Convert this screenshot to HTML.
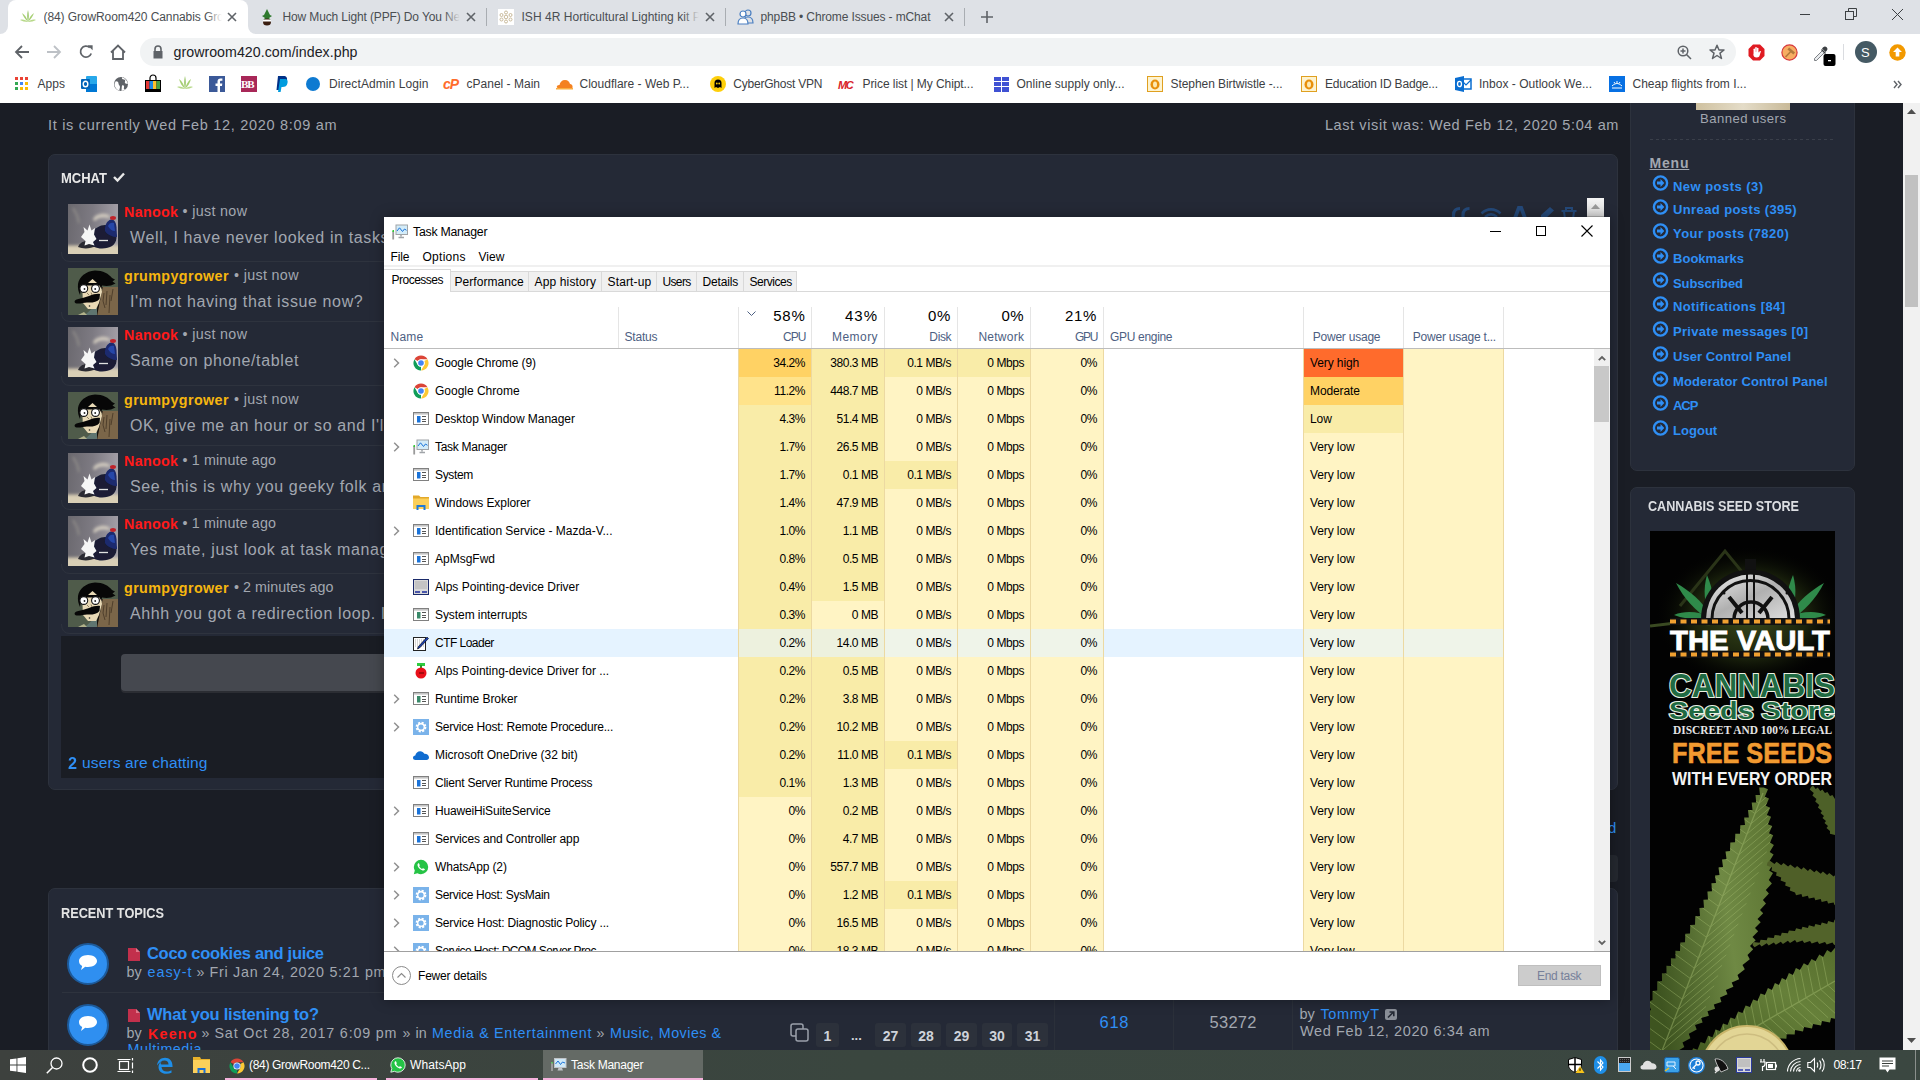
<!DOCTYPE html>
<html><head><meta charset="utf-8"><title>Task Manager</title>
<style>
*{margin:0;padding:0;box-sizing:border-box}
html,body{width:1920px;height:1080px;overflow:hidden;background:#1a1d25}
body{position:relative;font-family:"Liberation Sans",sans-serif}
.t{position:absolute;white-space:pre;line-height:1}
svg{position:absolute;overflow:visible}
</style></head><body>

<div style="position:absolute;left:0px;top:0px;width:1920px;height:34px;background:#dee1e6"></div>
<div style="position:absolute;left:0px;top:24px;width:260px;height:10px;background:#fff"></div>
<div style="position:absolute;left:-10px;top:0px;width:18px;height:34px;background:#dee1e6;border-bottom-right-radius:8px"></div>
<div style="position:absolute;left:248px;top:0px;width:20px;height:34px;background:#dee1e6;border-bottom-left-radius:8px"></div>
<div style="position:absolute;left:8px;top:0px;width:240px;height:34px;background:#fff;border-radius:8px 8px 0 0"></div>
<div style="position:absolute;left:0px;top:34px;width:1920px;height:69px;background:#fff"></div>
<div style="position:absolute;left:43.5px;top:10px;width:178px;height:16px;overflow:hidden"><div class="t" style="left:0px;top:1px;font-size:12px;color:#4a4e52;letter-spacing:-0.090px">(84) GrowRoom420 Cannabis Grow Forum</div><div style="position:absolute;right:0;top:0;width:16px;height:16px;background:linear-gradient(to right,rgba(0,0,0,0),#fff)"></div></div>
<div style="position:absolute;left:282.5px;top:10px;width:177px;height:16px;overflow:hidden"><div class="t" style="left:0px;top:1px;font-size:12px;color:#4a4e52;letter-spacing:-0.129px">How Much Light (PPF) Do You Need</div><div style="position:absolute;right:0;top:0;width:16px;height:16px;background:linear-gradient(to right,rgba(0,0,0,0),#dee1e6)"></div></div>
<div style="position:absolute;left:521.5px;top:10px;width:177px;height:16px;overflow:hidden"><div class="t" style="left:0px;top:1px;font-size:12px;color:#4a4e52;letter-spacing:0.032px">ISH 4R Horticultural Lighting kit Pro</div><div style="position:absolute;right:0;top:0;width:16px;height:16px;background:linear-gradient(to right,rgba(0,0,0,0),#dee1e6)"></div></div>
<div class="t" style="left:760.5px;top:11px;font-size:12px;color:#4a4e52;letter-spacing:-0.129px">phpBB • Chrome Issues - mChat</div>
<svg style="left:227px;top:12px" width="10" height="10" viewBox="0 0 10 10"><path d="M1 1L9 9M9 1L1 9" stroke="#5f6368" stroke-width="1.6"/></svg>
<svg style="left:466px;top:12px" width="10" height="10" viewBox="0 0 10 10"><path d="M1 1L9 9M9 1L1 9" stroke="#5f6368" stroke-width="1.6"/></svg>
<svg style="left:705px;top:12px" width="10" height="10" viewBox="0 0 10 10"><path d="M1 1L9 9M9 1L1 9" stroke="#5f6368" stroke-width="1.6"/></svg>
<svg style="left:944px;top:12px" width="10" height="10" viewBox="0 0 10 10"><path d="M1 1L9 9M9 1L1 9" stroke="#5f6368" stroke-width="1.6"/></svg>
<div style="position:absolute;left:486px;top:8px;width:1px;height:18px;background:#a9adb2"></div>
<div style="position:absolute;left:725px;top:8px;width:1px;height:18px;background:#a9adb2"></div>
<div style="position:absolute;left:964px;top:8px;width:1px;height:18px;background:#a9adb2"></div>
<svg style="left:981px;top:11px" width="12" height="12" viewBox="0 0 12 12"><path d="M6 0V12M0 6H12" stroke="#5f6368" stroke-width="1.6"/></svg>
<svg style="left:20px;top:9px" width="16" height="16" viewBox="0 0 16 16"><path d="M8 1C9 5 9 9 8 13C7 9 7 5 8 1Z" fill="#8fbf5a"/><path d="M8 13C5 10 3 7 2 4C5 6 7 9 8 13Z" fill="#a6cf72"/><path d="M8 13C11 10 13 7 14 4C11 6 9 9 8 13Z" fill="#a6cf72"/><path d="M8 13C5 13 2 12 0 11C3 10 6 11 8 13Z" fill="#b8d98a"/><path d="M8 13C11 13 14 12 16 11C13 10 10 11 8 13Z" fill="#b8d98a"/></svg>
<svg style="left:260px;top:9px" width="14" height="17" viewBox="0 0 14 17"><path d="M7 0L10 6L12 7L9 9L11 11L3 11L5 9L2 7L4 6Z" fill="#2f7a2e"/><ellipse cx="7" cy="13" rx="4" ry="3.5" fill="#3b1e10"/><rect x="3" y="10.5" width="8" height="2" fill="#fff"/></svg>
<svg style="left:498px;top:9px" width="16" height="16" viewBox="0 0 16 16"><rect width="16" height="16" fill="#fff"/><g fill="none" stroke="#c8b99a" stroke-width="1"><circle cx="8" cy="8" r="1.8"/><circle cx="8" cy="3.5" r="1.5"/><circle cx="8" cy="12.5" r="1.5"/><circle cx="3.5" cy="6" r="1.5"/><circle cx="12.5" cy="6" r="1.5"/><circle cx="3.5" cy="10.5" r="1.5"/><circle cx="12.5" cy="10.5" r="1.5"/></g></svg>
<svg style="left:737px;top:8px" width="17" height="17" viewBox="0 0 17 17"><g fill="none" stroke="#4a7fc1" stroke-width="1.2"><circle cx="11" cy="5" r="3"/><path d="M6 15C6 10 8.5 9 11 9C13.5 9 16 10 16 15Z"/><circle cx="6" cy="6" r="3" fill="#fff"/><path d="M1 16C1 11 3.5 10 6 10C8.5 10 11 11 11 16Z" fill="#fff"/></g></svg>
<div style="position:absolute;left:1800px;top:14px;width:10px;height:1px;background:#3c4043"></div>
<svg style="left:1845px;top:8px" width="12" height="12" viewBox="0 0 12 12"><g fill="none" stroke="#3c4043" stroke-width="1"><rect x="0.5" y="3.5" width="8" height="8"/><path d="M3.5 3.5V0.5H11.5V8.5H8.5"/></g></svg>
<svg style="left:1892px;top:9px" width="11" height="11" viewBox="0 0 11 11"><path d="M0 0L11 11M11 0L0 11" stroke="#3c4043" stroke-width="1"/></svg>
<svg style="left:14px;top:44px" width="16" height="16" viewBox="0 0 16 16"><path d="M15 8H2M8 2L2 8L8 14" fill="none" stroke="#5f6368" stroke-width="1.8"/></svg>
<svg style="left:46px;top:44px" width="16" height="16" viewBox="0 0 16 16"><path d="M1 8H14M8 2L14 8L8 14" fill="none" stroke="#bdc1c6" stroke-width="1.8"/></svg>
<svg style="left:78px;top:44px" width="16" height="16" viewBox="0 0 16 16"><path d="M13.2 9.5A5.5 5.5 0 1 1 11.8 3.6" fill="none" stroke="#5f6368" stroke-width="1.8"/><path d="M9.5 1.2L14.6 1.2L14.6 6.3Z" fill="#5f6368"/></svg>
<svg style="left:110px;top:44px" width="16" height="16" viewBox="0 0 16 16"><path d="M1 8.5L8 1.5L15 8.5M3 6.8V15H13V6.8" fill="none" stroke="#5f6368" stroke-width="1.8" stroke-linejoin="miter"/></svg>
<div style="position:absolute;left:140px;top:38px;width:1596px;height:28px;background:#f1f3f4;border-radius:14px"></div>
<svg style="left:152px;top:45px" width="12" height="14" viewBox="0 0 12 14"><path d="M3 6V4A3 3 0 0 1 9 4V6" fill="none" stroke="#5f6368" stroke-width="1.6"/><rect x="1.5" y="6" width="9" height="7.5" fill="#5f6368"/></svg>
<div class="t" style="left:173.5px;top:45px;font-size:14.2px;color:#202124;letter-spacing:0.043px">growroom420.com/index.php</div>
<svg style="left:1677px;top:45px" width="15" height="15" viewBox="0 0 15 15"><circle cx="6" cy="6" r="4.8" fill="none" stroke="#5f6368" stroke-width="1.5"/><path d="M9.5 9.5L14 14M6 3.5V8.5M3.5 6H8.5" stroke="#5f6368" stroke-width="1.5"/></svg>
<svg style="left:1709px;top:44px" width="16" height="16" viewBox="0 0 16 16"><path d="M8 1.3L10 6H15L11 9.2L12.5 14.5L8 11.5L3.5 14.5L5 9.2L1 6H6Z" fill="none" stroke="#5f6368" stroke-width="1.5" stroke-linejoin="round"/></svg>
<svg style="left:1748px;top:44px" width="17" height="17" viewBox="0 0 17 17"><path d="M5 0.5H12L16.5 5V12L12 16.5H5L0.5 12V5Z" fill="#e01b22"/><g stroke="#fff" stroke-linecap="round" fill="none"><path d="M6.3 9V5.2" stroke-width="1.5"/><path d="M8 9V3.8" stroke-width="1.6"/><path d="M9.7 9V4.4" stroke-width="1.5"/><path d="M11.3 10L12.2 7.6" stroke-width="1.4"/></g><ellipse cx="8.6" cy="10.6" rx="3.2" ry="2.9" fill="#fff"/></svg>
<svg style="left:1781px;top:44px" width="17" height="17" viewBox="0 0 17 17"><circle cx="8.5" cy="8.5" r="7.6" fill="#f7ad62" stroke="#d6363a" stroke-width="1.2"/><path d="M4.5 13L10.5 6.8" stroke="#b27a3c" stroke-width="1.6"/><path d="M7.3 4.6L13.2 9.6" stroke="#b27a3c" stroke-width="2.6"/></svg>
<svg style="left:1813px;top:43px" width="24" height="24" viewBox="0 0 24 24"><path d="M1.5 15.5L9.5 7.5L11.5 9.5L3.5 17.5L1.5 17.5Z" fill="#e8eaed" stroke="#6f7478" stroke-width="0.9"/><path d="M9 5.5L10.2 4.3A2.2 2.2 0 0 1 13.7 7.8L12.5 9Z" fill="#3c4043"/><path d="M8.5 6.5L12.5 10.5" stroke="#3c4043" stroke-width="1.4"/><rect x="10.5" y="11" width="12" height="12" rx="2" fill="#000"/><rect x="15" y="17" width="3" height="1.3" fill="#fff"/></svg>
<div style="position:absolute;left:1843px;top:44px;width:1px;height:16px;background:#dadce0"></div>
<div style="position:absolute;left:1855px;top:41px;width:22px;height:22px;border-radius:50%;background:#455a64"></div>
<div class="t" style="left:1861px;top:46px;font-size:13px;color:#fff">S</div>
<svg style="left:1889px;top:44px" width="17" height="17" viewBox="0 0 17 17"><circle cx="8.5" cy="8.5" r="8.2" fill="#f29900"/><path d="M8.5 3.5L13 8H10.3V12.5H6.7V8H4Z" fill="#fff"/></svg>
<div class="t" style="left:37.5px;top:78px;font-size:12px;color:#3c4043;letter-spacing:0.047px">Apps</div>
<div class="t" style="left:329.0px;top:78px;font-size:12px;color:#3c4043;letter-spacing:0.091px">DirectAdmin Login</div>
<div class="t" style="left:466.5px;top:78px;font-size:12px;color:#3c4043;letter-spacing:0.010px">cPanel - Main</div>
<div class="t" style="left:579.5px;top:78px;font-size:12px;color:#3c4043;letter-spacing:0.006px">Cloudflare - Web P...</div>
<div class="t" style="left:733.25px;top:78px;font-size:12px;color:#3c4043;letter-spacing:-0.215px">CyberGhost VPN</div>
<div class="t" style="left:862.5px;top:78px;font-size:12px;color:#3c4043;letter-spacing:-0.065px">Price list | My Chipt...</div>
<div class="t" style="left:1016.5px;top:78px;font-size:12px;color:#3c4043;letter-spacing:0.041px">Online supply only...</div>
<div class="t" style="left:1170.5px;top:78px;font-size:12px;color:#3c4043;letter-spacing:-0.063px">Stephen Birtwistle -...</div>
<div class="t" style="left:1325.0px;top:78px;font-size:12px;color:#3c4043;letter-spacing:-0.188px">Education ID Badge...</div>
<div class="t" style="left:1479.0px;top:78px;font-size:12px;color:#3c4043;letter-spacing:0.025px">Inbox - Outlook We...</div>
<div class="t" style="left:1632.5px;top:78px;font-size:12px;color:#3c4043;letter-spacing:-0.002px">Cheap flights from I...</div>
<div style="position:absolute;left:15px;top:77px;width:3px;height:3px;background:#ea4335"></div>
<div style="position:absolute;left:20px;top:77px;width:3px;height:3px;background:#ea4335"></div>
<div style="position:absolute;left:25px;top:77px;width:3px;height:3px;background:#ea4335"></div>
<div style="position:absolute;left:15px;top:82px;width:3px;height:3px;background:#34a853"></div>
<div style="position:absolute;left:20px;top:82px;width:3px;height:3px;background:#4285f4"></div>
<div style="position:absolute;left:25px;top:82px;width:3px;height:3px;background:#fbbc05"></div>
<div style="position:absolute;left:15px;top:87px;width:3px;height:3px;background:#34a853"></div>
<div style="position:absolute;left:20px;top:87px;width:3px;height:3px;background:#fbbc05"></div>
<div style="position:absolute;left:25px;top:87px;width:3px;height:3px;background:#fbbc05"></div>
<svg style="left:81px;top:76px" width="16" height="16" viewBox="0 0 16 16"><rect x="5" y="0" width="11" height="16" rx="1" fill="#28a8ea"/><rect x="5" y="8" width="11" height="8" fill="#0078d4"/><rect x="0" y="3" width="9" height="10" rx="1" fill="#0364b8"/><ellipse cx="4.5" cy="8" rx="2.3" ry="2.8" fill="none" stroke="#fff" stroke-width="1.4"/></svg>
<svg style="left:113px;top:76px" width="16" height="16" viewBox="0 0 16 16"><circle cx="8" cy="8" r="7" fill="#5f6368"/><path d="M2.5 5.5C4 5 5.5 6 5.5 7.5C5.5 9 7 9.5 7 11C7 12.5 6 13.5 6.5 14.8L4 13.5C2.5 12 1.5 10 1.5 8Z M9 1.2C8.5 2.5 9.5 3.5 11 3.5C12 3.5 12.5 4.5 12 5.5C11.5 6.5 12 7.5 13.5 7.8L14.8 8C14.5 5 12.5 2.2 9 1.2Z M9.5 9C10.5 9 11.5 10 11 11.5C10.5 12.5 11 13 11.8 13.5C10.5 14.5 9.5 14.8 8.5 15C8.8 13.5 8.5 12 8.8 10.5Z" fill="#fff"/></svg>
<svg style="left:145px;top:75px" width="16" height="17" viewBox="0 0 16 17"><path d="M5 5V3A3 3 0 0 1 11 3V5" fill="none" stroke="#000" stroke-width="1.2"/><rect x="0" y="5" width="16" height="12" fill="#000"/><rect x="1" y="6" width="3.5" height="8" fill="#e53935"/><rect x="4.5" y="6" width="3.5" height="8" fill="#1e88e5"/><rect x="8" y="6" width="3.5" height="8" fill="#fbc02d"/><rect x="11.5" y="6" width="3.5" height="8" fill="#43a047"/></svg>
<svg style="left:177px;top:76px" width="16" height="16" viewBox="0 0 16 16"><path d="M8 0C9 4 9 9 8 13C7 9 7 4 8 0Z" fill="#8fbf5a"/><path d="M8 13C5 10 3 7 2 3C5 5 7 9 8 13Z" fill="#a6cf72"/><path d="M8 13C11 10 13 7 14 3C11 5 9 9 8 13Z" fill="#a6cf72"/><path d="M8 13C5 13 2 12 0 11C3 10 6 11 8 13Z" fill="#b8d98a"/><path d="M8 13C11 13 14 12 16 11C13 10 10 11 8 13Z" fill="#b8d98a"/></svg>
<svg style="left:209px;top:76px" width="16" height="16" viewBox="0 0 16 16"><rect width="16" height="16" fill="#3b5998"/><path d="M11 16V10H13L13.3 7.5H11V6C11 5.3 11.3 4.8 12.3 4.8H13.4V2.6C13 2.5 12.3 2.4 11.5 2.4C9.7 2.4 8.5 3.5 8.5 5.5V7.5H6.5V10H8.5V16Z" fill="#fff"/></svg>
<div style="position:absolute;left:241px;top:76px;width:16px;height:16px;background:#a82858"></div>
<div class="t" style="left:241px;top:78px;font:bold 11px 'Liberation Serif',serif;color:#fff;letter-spacing:-1px">BB</div>
<svg style="left:275px;top:76px" width="13" height="16" viewBox="0 0 13 16"><path d="M3 0H8.5C11.5 0 12.5 2 12 4.5C11.4 7.5 9.5 8.5 7 8.5H5.5L4.5 14H1.5Z" fill="#003087"/><path d="M5 3H9.5C12.5 3 13 5 12.5 7C12 10 10 11 7.5 11H6.5L5.6 16H3Z" fill="#009cde"/></svg>
<div style="position:absolute;left:306px;top:77px;width:14px;height:14px;border-radius:50%;background:#0e7ad1"></div>
<div class="t" style="left:443px;top:76px;font:italic bold 14px 'Liberation Sans',sans-serif;color:#ff6c2c;letter-spacing:-1px">cP</div>
<svg style="left:556px;top:78px" width="17" height="12" viewBox="0 0 17 12"><path d="M2 10C1 10 0.5 9 1 8C1.5 7 3 7 3.5 7C4 4 6 2 9 2C12 2 13.5 4 14 6C15.5 6 17 7 16.5 10Z" fill="#f48120"/><rect x="0" y="10" width="17" height="1.5" fill="#faad3f"/></svg>
<svg style="left:710px;top:76px" width="16" height="16" viewBox="0 0 16 16"><circle cx="8" cy="8" r="8" fill="#fecf0a"/><path d="M4.5 12V7A3.5 3.5 0 0 1 11.5 7V12L10 11L8 12L6 11Z" fill="#000"/><circle cx="6.8" cy="7.5" r="0.9" fill="#fecf0a"/><circle cx="9.2" cy="7.5" r="0.9" fill="#fecf0a"/></svg>
<div class="t" style="left:838px;top:79px;font:italic bold 11px 'Liberation Sans',sans-serif;color:#d8232a;letter-spacing:-1.5px">MC</div>
<svg style="left:994px;top:77px" width="15" height="15" viewBox="0 0 15 15"><g fill="#3f51d3"><rect x="0" y="0" width="7" height="4"/><rect x="8" y="0" width="7" height="4"/><rect x="0" y="5" width="7" height="4"/><rect x="8" y="5" width="7" height="4"/><rect x="0" y="10" width="7" height="5"/><rect x="8" y="10" width="7" height="5"/></g></svg>
<svg style="left:1147px;top:76px" width="16" height="16" viewBox="0 0 16 16"><rect x="0.5" y="0.5" width="15" height="15" fill="#fdf3d0" stroke="#e0a020"/><ellipse cx="8" cy="8.5" rx="4.5" ry="5" fill="#e8900c"/><ellipse cx="8" cy="8.5" rx="2" ry="3" fill="#fde9b0"/></svg>
<svg style="left:1301px;top:76px" width="16" height="16" viewBox="0 0 16 16"><rect x="0.5" y="0.5" width="15" height="15" fill="#fdf3d0" stroke="#e0a020"/><ellipse cx="8" cy="8.5" rx="4.5" ry="5" fill="#e8900c"/><ellipse cx="8" cy="8.5" rx="2" ry="3" fill="#fde9b0"/></svg>
<svg style="left:1455px;top:76px" width="16" height="16" viewBox="0 0 16 16"><rect x="6" y="3" width="10" height="10" fill="none" stroke="#0a6ed1" stroke-width="1.5"/><path d="M6 4L11 9L16 4" fill="none" stroke="#0a6ed1" stroke-width="1.2"/><path d="M0 2L9 0V16L0 14Z" fill="#0a6ed1"/><ellipse cx="4.5" cy="8" rx="2" ry="2.7" fill="none" stroke="#fff" stroke-width="1.3"/></svg>
<svg style="left:1609px;top:76px" width="16" height="16" viewBox="0 0 16 16"><rect width="16" height="16" fill="#0770e3"/><path d="M3 10C5 8 7 7.5 8 7.5C9 7.5 11 8 13 10M8 5V7M5 6L6 7.5M11 6L10 7.5M3 12H13" stroke="#fff" stroke-width="1" fill="none"/></svg>
<svg style="left:1893px;top:80px" width="9" height="9" viewBox="0 0 9 9"><path d="M1 1L4 4.5L1 8M5 1L8 4.5L5 8" fill="none" stroke="#5f6368" stroke-width="1.4"/></svg>
<div style="position:absolute;left:0;top:0;width:1920px;height:1080px;clip-path:inset(103px 0 30px 0)"><div style="position:absolute;left:0px;top:103px;width:1920px;height:947px;background:#1a1d25"></div>
<div class="t" style="left:48px;top:118px;font-size:14.5px;color:#a2a7b0;letter-spacing:0.688px">It is currently Wed Feb 12, 2020 8:09 am</div>
<div class="t" style="right:301px;top:118px;font-size:14.5px;color:#a2a7b0;letter-spacing:0.609px">Last visit was: Wed Feb 12, 2020 5:04 am</div>
<div style="position:absolute;left:48px;top:154px;width:1570px;height:636px;background:#242936;border:1px solid #2d323d;border-radius:7px"></div>
<div class="t" style="left:60.5px;top:169.5px;font:bold 14.2px 'Liberation Sans',sans-serif;color:#e8e8e8;transform:scaleX(0.9168);transform-origin:0 0">MCHAT</div>
<svg style="left:113px;top:172px" width="12" height="10" viewBox="0 0 12 10"><path d="M1 5L4.5 8.5L11 1.5" fill="none" stroke="#e8e8e8" stroke-width="2.4"/></svg>
<svg style="left:1452px;top:207px" width="20" height="12" viewBox="0 0 20 12"><path d="M8 1.5C4 1.5 1.5 4 1.5 8V12M17.5 1.5C13.5 1.5 11 4 11 8V12" stroke="#24497a" stroke-width="3.2" fill="none"/></svg>
<svg style="left:1480px;top:207px" width="22" height="12" viewBox="0 0 22 12"><path d="M1.5 6.5C7 1 15 1 20.5 6.5M5 10C9 6.5 13 6.5 17 10" stroke="#24497a" stroke-width="2.6" fill="none"/></svg>
<svg style="left:1513px;top:206px" width="14" height="12" viewBox="0 0 14 12"><path d="M4.5 0H9.5L14 12H10L7 4L4 12H0Z" fill="#24497a"/></svg>
<svg style="left:1540px;top:207px" width="14" height="12" viewBox="0 0 14 12"><path d="M10 0L14 3.5L5 12H1V8Z" fill="#24497a"/></svg>
<svg style="left:1561px;top:207px" width="16" height="12" viewBox="0 0 16 12"><path d="M5 3V1H11V3M0.5 4H15.5M3 4.5L4 12H12L13 4.5" stroke="#24497a" stroke-width="2" fill="none"/></svg>
<div style="position:absolute;left:1587px;top:198px;width:17px;height:19px;background:linear-gradient(#f4f4f4,#dcdcdc);border-bottom:1px solid #b0b0b0"></div>
<svg style="left:1591px;top:204px" width="9" height="5" viewBox="0 0 9 5"><path d="M0 5L4.5 0L9 5Z" fill="#9a9a9a"/></svg>
<svg style="left:68px;top:204px" width="50" height="50" viewBox="0 0 50 50"><defs><linearGradient id="nbg" x1="0" y1="0" x2="1" y2="0.1"><stop offset="0" stop-color="#6a686e"/><stop offset="0.5" stop-color="#7d7a82"/><stop offset="1" stop-color="#a29ea6"/></linearGradient><filter id="nbl" x="-20%" y="-20%" width="140%" height="140%"><feGaussianBlur stdDeviation="0.55"/></filter><filter id="nbl2" x="-50%" y="-50%" width="200%" height="200%"><feGaussianBlur stdDeviation="1.4"/></filter><clipPath id="ncl"><rect width="50" height="50"/></clipPath></defs><g clip-path="url(#ncl)"><rect width="50" height="50" fill="url(#nbg)"/><g filter="url(#nbl2)"><path d="M25 16C26 11 32 9 38 10C42 11 43 13 41 14C36 13 30 13 27 17Z" fill="#d6cfc2" opacity="0.9"/><path d="M5 4L9 11L11 19" stroke="#908d8a" stroke-width="1.8" fill="none"/><rect x="-5" y="41.5" width="60" height="14" fill="#d9cfb6"/></g><g filter="url(#nbl)"><path d="M10 43C12 38 17 36 23 37L28 42C22 45 15 45 10 43Z" fill="#2a2a30"/><path d="M24 29C27 24 32 21 37 21C44 21 49 27 48.5 34C48 41 42 44.5 34 44.5C28 44.5 23 42 22 38C22 35 22.5 31.5 24 29Z" fill="#1a1e36"/><path d="M37 27C36.5 21 39 16.5 43 15.5C46 15 48 18 48.5 23L49 33C45 33 39.5 31 37 27Z" fill="#1b2a6e"/><path d="M40 22C41 19 43.5 18 46 19L47 27C44 27 41.5 25 40 22Z" fill="#2646a8"/><ellipse cx="45" cy="14" rx="3" ry="1.9" fill="#c0232b"/><path d="M13 33L16.5 28L15.5 23L19.5 26.5L21.5 20.5L23.5 26.5L27 24L26 30.5L28.5 35L25 38L26.5 41.5L21 40L16.5 41.5L17.5 37Z" fill="#f6f6f6"/><path d="M31 36.5H40" stroke="#e0e0e0" stroke-width="1.3"/></g></g></svg>
<div class="t" style="left:124px;top:204.4px;font:bold 14.3px 'Liberation Sans',sans-serif;color:#ff1a1a;letter-spacing:0.312px">Nanook</div>
<div class="t" style="left:182.5px;top:204.4px;font-size:14.3px;color:#a2a7b0;letter-spacing:0.340px">• just now</div>
<div class="t" style="left:130px;top:229.5px;font-size:16px;color:#a2a7b0;letter-spacing:0.62px">Well, I have never looked in tasks</div>
<svg style="left:0;top:0" width="1" height="1"><path d="M61.5 252 Q61.5 261.5 70 261.5 L1604 261.5" fill="none" stroke="#2e333e" stroke-width="1"/></svg>
<svg style="left:68px;top:268px" width="50" height="47" viewBox="0 0 50 47"><rect width="50" height="47" fill="#4f5b4a"/><path d="M33 19L50 19V47H28.5Z" fill="#7b6649"/><path d="M34 19L28.5 47" stroke="#15100b" stroke-width="1.4"/><path d="M36 25L35 33L37 40M39 23L38 37M42 27L41 45M45 21L43 33" stroke="#4a3a28" stroke-width="0.9" fill="none"/><path d="M17 47L29 36V47Z" fill="#5f7570"/><path d="M14 15L33 15L34 24L31 35L28 41L20 41L15 35Z" fill="#e8d9b5"/><path d="M10 16C11 9 18 3 27 2.5C35 2.5 41 6 44 10L47 11.5L44.5 13.5L47.5 15.5L43 17.5C40 18 37 18 34 17.5L33.5 21L31.5 17.5L14 17.5C13 21 12.5 24 12 27C10.5 24 9.5 20 10 16Z" fill="#070707"/><path d="M20 15L24.5 11L29 15Z" fill="#e8d9b5"/><circle cx="15.8" cy="20.5" r="3.9" fill="#fff" stroke="#111" stroke-width="1.1"/><circle cx="27.5" cy="20.5" r="3.9" fill="#fff" stroke="#111" stroke-width="1.1"/><circle cx="16.5" cy="21" r="0.9" fill="#222"/><circle cx="27.2" cy="21" r="0.9" fill="#222"/><path d="M32 26C29 25.5 25 26.5 21 28C17 29.5 12 30.5 8.5 31.5C6 32.5 6 35 8.5 35.5C12 36 16 34.5 19 34.5C24 35 29 34 31.5 31Z" fill="#070707"/><path d="M19 25L21 27M23 24.5L24 27" stroke="#6a5a40" stroke-width="0.7"/><circle cx="21.5" cy="38" r="0.8" fill="#222"/><path d="M10 47L16 44L19 47Z" fill="#c9c79a" opacity="0.8"/></svg>
<div class="t" style="left:124px;top:268.4px;font:bold 14.3px 'Liberation Sans',sans-serif;color:#f6b60f;letter-spacing:0.401px">grumpygrower</div>
<div class="t" style="left:234px;top:268.4px;font-size:14.3px;color:#a2a7b0;letter-spacing:0.340px">• just now</div>
<div class="t" style="left:130px;top:293.5px;font-size:16px;color:#a2a7b0;letter-spacing:0.62px">I&#x27;m not having that issue now?</div>
<svg style="left:0;top:0" width="1" height="1"><path d="M61.5 312 Q61.5 321.5 70 321.5 L1604 321.5" fill="none" stroke="#2e333e" stroke-width="1"/></svg>
<svg style="left:68px;top:327px" width="50" height="50" viewBox="0 0 50 50"><defs><linearGradient id="nbg" x1="0" y1="0" x2="1" y2="0.1"><stop offset="0" stop-color="#6a686e"/><stop offset="0.5" stop-color="#7d7a82"/><stop offset="1" stop-color="#a29ea6"/></linearGradient><filter id="nbl" x="-20%" y="-20%" width="140%" height="140%"><feGaussianBlur stdDeviation="0.55"/></filter><filter id="nbl2" x="-50%" y="-50%" width="200%" height="200%"><feGaussianBlur stdDeviation="1.4"/></filter><clipPath id="ncl"><rect width="50" height="50"/></clipPath></defs><g clip-path="url(#ncl)"><rect width="50" height="50" fill="url(#nbg)"/><g filter="url(#nbl2)"><path d="M25 16C26 11 32 9 38 10C42 11 43 13 41 14C36 13 30 13 27 17Z" fill="#d6cfc2" opacity="0.9"/><path d="M5 4L9 11L11 19" stroke="#908d8a" stroke-width="1.8" fill="none"/><rect x="-5" y="41.5" width="60" height="14" fill="#d9cfb6"/></g><g filter="url(#nbl)"><path d="M10 43C12 38 17 36 23 37L28 42C22 45 15 45 10 43Z" fill="#2a2a30"/><path d="M24 29C27 24 32 21 37 21C44 21 49 27 48.5 34C48 41 42 44.5 34 44.5C28 44.5 23 42 22 38C22 35 22.5 31.5 24 29Z" fill="#1a1e36"/><path d="M37 27C36.5 21 39 16.5 43 15.5C46 15 48 18 48.5 23L49 33C45 33 39.5 31 37 27Z" fill="#1b2a6e"/><path d="M40 22C41 19 43.5 18 46 19L47 27C44 27 41.5 25 40 22Z" fill="#2646a8"/><ellipse cx="45" cy="14" rx="3" ry="1.9" fill="#c0232b"/><path d="M13 33L16.5 28L15.5 23L19.5 26.5L21.5 20.5L23.5 26.5L27 24L26 30.5L28.5 35L25 38L26.5 41.5L21 40L16.5 41.5L17.5 37Z" fill="#f6f6f6"/><path d="M31 36.5H40" stroke="#e0e0e0" stroke-width="1.3"/></g></g></svg>
<div class="t" style="left:124px;top:327.4px;font:bold 14.3px 'Liberation Sans',sans-serif;color:#ff1a1a;letter-spacing:0.312px">Nanook</div>
<div class="t" style="left:182.5px;top:327.4px;font-size:14.3px;color:#a2a7b0;letter-spacing:0.340px">• just now</div>
<div class="t" style="left:130px;top:352.5px;font-size:16px;color:#a2a7b0;letter-spacing:0.62px">Same on phone/tablet</div>
<svg style="left:0;top:0" width="1" height="1"><path d="M61.5 376 Q61.5 385.5 70 385.5 L1604 385.5" fill="none" stroke="#2e333e" stroke-width="1"/></svg>
<svg style="left:68px;top:392px" width="50" height="47" viewBox="0 0 50 47"><rect width="50" height="47" fill="#4f5b4a"/><path d="M33 19L50 19V47H28.5Z" fill="#7b6649"/><path d="M34 19L28.5 47" stroke="#15100b" stroke-width="1.4"/><path d="M36 25L35 33L37 40M39 23L38 37M42 27L41 45M45 21L43 33" stroke="#4a3a28" stroke-width="0.9" fill="none"/><path d="M17 47L29 36V47Z" fill="#5f7570"/><path d="M14 15L33 15L34 24L31 35L28 41L20 41L15 35Z" fill="#e8d9b5"/><path d="M10 16C11 9 18 3 27 2.5C35 2.5 41 6 44 10L47 11.5L44.5 13.5L47.5 15.5L43 17.5C40 18 37 18 34 17.5L33.5 21L31.5 17.5L14 17.5C13 21 12.5 24 12 27C10.5 24 9.5 20 10 16Z" fill="#070707"/><path d="M20 15L24.5 11L29 15Z" fill="#e8d9b5"/><circle cx="15.8" cy="20.5" r="3.9" fill="#fff" stroke="#111" stroke-width="1.1"/><circle cx="27.5" cy="20.5" r="3.9" fill="#fff" stroke="#111" stroke-width="1.1"/><circle cx="16.5" cy="21" r="0.9" fill="#222"/><circle cx="27.2" cy="21" r="0.9" fill="#222"/><path d="M32 26C29 25.5 25 26.5 21 28C17 29.5 12 30.5 8.5 31.5C6 32.5 6 35 8.5 35.5C12 36 16 34.5 19 34.5C24 35 29 34 31.5 31Z" fill="#070707"/><path d="M19 25L21 27M23 24.5L24 27" stroke="#6a5a40" stroke-width="0.7"/><circle cx="21.5" cy="38" r="0.8" fill="#222"/><path d="M10 47L16 44L19 47Z" fill="#c9c79a" opacity="0.8"/></svg>
<div class="t" style="left:124px;top:392.4px;font:bold 14.3px 'Liberation Sans',sans-serif;color:#f6b60f;letter-spacing:0.401px">grumpygrower</div>
<div class="t" style="left:234px;top:392.4px;font-size:14.3px;color:#a2a7b0;letter-spacing:0.340px">• just now</div>
<div class="t" style="left:130px;top:417.5px;font-size:16px;color:#a2a7b0;letter-spacing:0.62px">OK, give me an hour or so and I&#x27;ll</div>
<svg style="left:0;top:0" width="1" height="1"><path d="M61.5 436 Q61.5 445.5 70 445.5 L1604 445.5" fill="none" stroke="#2e333e" stroke-width="1"/></svg>
<svg style="left:68px;top:453px" width="50" height="50" viewBox="0 0 50 50"><defs><linearGradient id="nbg" x1="0" y1="0" x2="1" y2="0.1"><stop offset="0" stop-color="#6a686e"/><stop offset="0.5" stop-color="#7d7a82"/><stop offset="1" stop-color="#a29ea6"/></linearGradient><filter id="nbl" x="-20%" y="-20%" width="140%" height="140%"><feGaussianBlur stdDeviation="0.55"/></filter><filter id="nbl2" x="-50%" y="-50%" width="200%" height="200%"><feGaussianBlur stdDeviation="1.4"/></filter><clipPath id="ncl"><rect width="50" height="50"/></clipPath></defs><g clip-path="url(#ncl)"><rect width="50" height="50" fill="url(#nbg)"/><g filter="url(#nbl2)"><path d="M25 16C26 11 32 9 38 10C42 11 43 13 41 14C36 13 30 13 27 17Z" fill="#d6cfc2" opacity="0.9"/><path d="M5 4L9 11L11 19" stroke="#908d8a" stroke-width="1.8" fill="none"/><rect x="-5" y="41.5" width="60" height="14" fill="#d9cfb6"/></g><g filter="url(#nbl)"><path d="M10 43C12 38 17 36 23 37L28 42C22 45 15 45 10 43Z" fill="#2a2a30"/><path d="M24 29C27 24 32 21 37 21C44 21 49 27 48.5 34C48 41 42 44.5 34 44.5C28 44.5 23 42 22 38C22 35 22.5 31.5 24 29Z" fill="#1a1e36"/><path d="M37 27C36.5 21 39 16.5 43 15.5C46 15 48 18 48.5 23L49 33C45 33 39.5 31 37 27Z" fill="#1b2a6e"/><path d="M40 22C41 19 43.5 18 46 19L47 27C44 27 41.5 25 40 22Z" fill="#2646a8"/><ellipse cx="45" cy="14" rx="3" ry="1.9" fill="#c0232b"/><path d="M13 33L16.5 28L15.5 23L19.5 26.5L21.5 20.5L23.5 26.5L27 24L26 30.5L28.5 35L25 38L26.5 41.5L21 40L16.5 41.5L17.5 37Z" fill="#f6f6f6"/><path d="M31 36.5H40" stroke="#e0e0e0" stroke-width="1.3"/></g></g></svg>
<div class="t" style="left:124px;top:453.4px;font:bold 14.3px 'Liberation Sans',sans-serif;color:#ff1a1a;letter-spacing:0.312px">Nanook</div>
<div class="t" style="left:182.5px;top:453.4px;font-size:14.3px;color:#a2a7b0;letter-spacing:0.143px">• 1 minute ago</div>
<div class="t" style="left:130px;top:478.5px;font-size:16px;color:#a2a7b0;letter-spacing:0.62px">See, this is why you geeky folk are</div>
<svg style="left:0;top:0" width="1" height="1"><path d="M61.5 500 Q61.5 509.5 70 509.5 L1604 509.5" fill="none" stroke="#2e333e" stroke-width="1"/></svg>
<svg style="left:68px;top:516px" width="50" height="50" viewBox="0 0 50 50"><defs><linearGradient id="nbg" x1="0" y1="0" x2="1" y2="0.1"><stop offset="0" stop-color="#6a686e"/><stop offset="0.5" stop-color="#7d7a82"/><stop offset="1" stop-color="#a29ea6"/></linearGradient><filter id="nbl" x="-20%" y="-20%" width="140%" height="140%"><feGaussianBlur stdDeviation="0.55"/></filter><filter id="nbl2" x="-50%" y="-50%" width="200%" height="200%"><feGaussianBlur stdDeviation="1.4"/></filter><clipPath id="ncl"><rect width="50" height="50"/></clipPath></defs><g clip-path="url(#ncl)"><rect width="50" height="50" fill="url(#nbg)"/><g filter="url(#nbl2)"><path d="M25 16C26 11 32 9 38 10C42 11 43 13 41 14C36 13 30 13 27 17Z" fill="#d6cfc2" opacity="0.9"/><path d="M5 4L9 11L11 19" stroke="#908d8a" stroke-width="1.8" fill="none"/><rect x="-5" y="41.5" width="60" height="14" fill="#d9cfb6"/></g><g filter="url(#nbl)"><path d="M10 43C12 38 17 36 23 37L28 42C22 45 15 45 10 43Z" fill="#2a2a30"/><path d="M24 29C27 24 32 21 37 21C44 21 49 27 48.5 34C48 41 42 44.5 34 44.5C28 44.5 23 42 22 38C22 35 22.5 31.5 24 29Z" fill="#1a1e36"/><path d="M37 27C36.5 21 39 16.5 43 15.5C46 15 48 18 48.5 23L49 33C45 33 39.5 31 37 27Z" fill="#1b2a6e"/><path d="M40 22C41 19 43.5 18 46 19L47 27C44 27 41.5 25 40 22Z" fill="#2646a8"/><ellipse cx="45" cy="14" rx="3" ry="1.9" fill="#c0232b"/><path d="M13 33L16.5 28L15.5 23L19.5 26.5L21.5 20.5L23.5 26.5L27 24L26 30.5L28.5 35L25 38L26.5 41.5L21 40L16.5 41.5L17.5 37Z" fill="#f6f6f6"/><path d="M31 36.5H40" stroke="#e0e0e0" stroke-width="1.3"/></g></g></svg>
<div class="t" style="left:124px;top:516.4px;font:bold 14.3px 'Liberation Sans',sans-serif;color:#ff1a1a;letter-spacing:0.312px">Nanook</div>
<div class="t" style="left:182.5px;top:516.4px;font-size:14.3px;color:#a2a7b0;letter-spacing:0.143px">• 1 minute ago</div>
<div class="t" style="left:130px;top:541.5px;font-size:16px;color:#a2a7b0;letter-spacing:0.62px">Yes mate, just look at task manager</div>
<svg style="left:0;top:0" width="1" height="1"><path d="M61.5 564 Q61.5 573.5 70 573.5 L1604 573.5" fill="none" stroke="#2e333e" stroke-width="1"/></svg>
<svg style="left:68px;top:580px" width="50" height="47" viewBox="0 0 50 47"><rect width="50" height="47" fill="#4f5b4a"/><path d="M33 19L50 19V47H28.5Z" fill="#7b6649"/><path d="M34 19L28.5 47" stroke="#15100b" stroke-width="1.4"/><path d="M36 25L35 33L37 40M39 23L38 37M42 27L41 45M45 21L43 33" stroke="#4a3a28" stroke-width="0.9" fill="none"/><path d="M17 47L29 36V47Z" fill="#5f7570"/><path d="M14 15L33 15L34 24L31 35L28 41L20 41L15 35Z" fill="#e8d9b5"/><path d="M10 16C11 9 18 3 27 2.5C35 2.5 41 6 44 10L47 11.5L44.5 13.5L47.5 15.5L43 17.5C40 18 37 18 34 17.5L33.5 21L31.5 17.5L14 17.5C13 21 12.5 24 12 27C10.5 24 9.5 20 10 16Z" fill="#070707"/><path d="M20 15L24.5 11L29 15Z" fill="#e8d9b5"/><circle cx="15.8" cy="20.5" r="3.9" fill="#fff" stroke="#111" stroke-width="1.1"/><circle cx="27.5" cy="20.5" r="3.9" fill="#fff" stroke="#111" stroke-width="1.1"/><circle cx="16.5" cy="21" r="0.9" fill="#222"/><circle cx="27.2" cy="21" r="0.9" fill="#222"/><path d="M32 26C29 25.5 25 26.5 21 28C17 29.5 12 30.5 8.5 31.5C6 32.5 6 35 8.5 35.5C12 36 16 34.5 19 34.5C24 35 29 34 31.5 31Z" fill="#070707"/><path d="M19 25L21 27M23 24.5L24 27" stroke="#6a5a40" stroke-width="0.7"/><circle cx="21.5" cy="38" r="0.8" fill="#222"/><path d="M10 47L16 44L19 47Z" fill="#c9c79a" opacity="0.8"/></svg>
<div class="t" style="left:124px;top:580.4px;font:bold 14.3px 'Liberation Sans',sans-serif;color:#f6b60f;letter-spacing:0.401px">grumpygrower</div>
<div class="t" style="left:234px;top:580.4px;font-size:14.3px;color:#a2a7b0;letter-spacing:0.050px">• 2 minutes ago</div>
<div class="t" style="left:130px;top:605.5px;font-size:16px;color:#a2a7b0;letter-spacing:0.62px">Ahhh you got a redirection loop. I</div>
<svg style="left:0;top:0" width="1" height="1"><path d="M61.5 624 Q61.5 633.5 70 633.5 L1604 633.5" fill="none" stroke="#2e333e" stroke-width="1"/></svg>
<div style="position:absolute;left:61px;top:636px;width:1545px;height:142px;background:#1a1d24"></div>
<div style="position:absolute;left:121px;top:654px;width:1420px;height:37px;background:#45484f;border-radius:4px;box-shadow:0 2px 0 #2b2d33"></div>
<div class="t" style="left:67.5px;top:754px;font:bold 16.5px 'Liberation Sans',sans-serif;color:#2f8ff5;transform:scaleX(0.9796);transform-origin:0 0">2</div>
<div class="t" style="left:82px;top:754.5px;font-size:15.5px;color:#2f8ff5;letter-spacing:0.134px">users are chatting</div>
<div class="t" style="left:1608px;top:820px;font-size:15px;color:#2f8ff5">d</div>
<div style="position:absolute;left:1590px;top:855px;width:28px;height:27px;background:#252930;border-radius:4px"></div>
<div style="position:absolute;left:48px;top:888px;width:1570px;height:300px;background:#242936;border:1px solid #2d323d;border-radius:7px"></div>
<div class="t" style="left:61px;top:905px;font:bold 14px 'Liberation Sans',sans-serif;color:#e4e4e4;transform:scaleX(0.9090);transform-origin:0 0">RECENT TOPICS</div>
<div style="position:absolute;left:67px;top:943px;width:42px;height:42px;border-radius:50%;background:#2f8ff0;border:2px solid #1d5a9a"></div>
<svg style="left:77px;top:954px" width="22" height="18" viewBox="0 0 22 18"><path d="M11 1C16.5 1 20 3.8 20 7C20 10.2 16.5 13 11 13C10 13 9 12.9 8.2 12.7L4 16L5.2 12C3 11 2 9 2 7C2 3.8 5.5 1 11 1Z" fill="#fff"/></svg>
<svg style="left:128px;top:948px" width="12" height="13" viewBox="0 0 12 13"><path d="M0 0H8L12 4V13H0Z" fill="#c2304c"/><path d="M8 0V4H12" fill="#e07a8c"/></svg>
<div class="t" style="left:147px;top:943.6px;font:bold 16.5px 'Liberation Sans',sans-serif;color:#2f8ff5;letter-spacing:-0.304px">Coco cookies and juice</div>
<div class="t" style="left:126.5px;top:965px;font-size:14.3px;color:#a2a7b0">by</div>
<div class="t" style="left:147.5px;top:965px;font-size:14.3px;color:#2f8ff5;letter-spacing:1.012px">easy-t</div>
<div class="t" style="left:196.5px;top:965px;font-size:14.3px;color:#a2a7b0">»</div>
<div class="t" style="left:209.5px;top:965px;font-size:14.3px;color:#a2a7b0;letter-spacing:0.741px">Fri Jan 24, 2020 5:21 pm</div>
<div style="position:absolute;left:62px;top:992px;width:1540px;height:1px;background:#2e333e"></div>
<div style="position:absolute;left:67px;top:1004px;width:42px;height:42px;border-radius:50%;background:#2f8ff0;border:2px solid #1d5a9a"></div>
<svg style="left:77px;top:1015px" width="22" height="18" viewBox="0 0 22 18"><path d="M11 1C16.5 1 20 3.8 20 7C20 10.2 16.5 13 11 13C10 13 9 12.9 8.2 12.7L4 16L5.2 12C3 11 2 9 2 7C2 3.8 5.5 1 11 1Z" fill="#fff"/></svg>
<svg style="left:128px;top:1009px" width="12" height="13" viewBox="0 0 12 13"><path d="M0 0H8L12 4V13H0Z" fill="#c2304c"/><path d="M8 0V4H12" fill="#e07a8c"/></svg>
<div class="t" style="left:147px;top:1004.6px;font:bold 16.5px 'Liberation Sans',sans-serif;color:#2f8ff5;letter-spacing:-0.234px">What you listening to?</div>
<div class="t" style="left:126.5px;top:1026px;font-size:14.3px;color:#a2a7b0">by</div>
<div class="t" style="left:148px;top:1026px;font:bold 14.3px 'Liberation Sans',sans-serif;color:#ff1a1a;letter-spacing:1.199px">Keeno</div>
<div class="t" style="left:201.5px;top:1026px;font-size:14.3px;color:#a2a7b0">»</div>
<div class="t" style="left:214.5px;top:1026px;font-size:14.3px;color:#a2a7b0;letter-spacing:0.829px">Sat Oct 28, 2017 6:09 pm</div>
<div class="t" style="left:402.5px;top:1026px;font-size:14.3px;color:#a2a7b0">»</div>
<div class="t" style="left:415.5px;top:1026px;font-size:14.3px;color:#a2a7b0">in</div>
<div class="t" style="left:432px;top:1026px;font-size:14.3px;color:#2f8ff5;letter-spacing:0.703px">Media &amp; Entertainment</div>
<div class="t" style="left:596.5px;top:1026px;font-size:14.3px;color:#a2a7b0">»</div>
<div class="t" style="left:610px;top:1026px;font-size:14.3px;color:#2f8ff5;letter-spacing:0.494px">Music, Movies &amp;</div>
<div class="t" style="left:127.5px;top:1041.5px;font-size:14.3px;color:#2f8ff5;letter-spacing:0.542px">Multimedia</div>
<svg style="left:790px;top:1023px" width="20" height="19" viewBox="0 0 20 19"><rect x="1" y="1" width="12" height="12" rx="2" fill="none" stroke="#9aa0aa" stroke-width="1.5"/><rect x="6" y="6" width="12" height="12" rx="2" fill="#242936" stroke="#9aa0aa" stroke-width="1.5"/></svg>
<div style="position:absolute;left:816px;top:1023px;width:23px;height:24px;background:#2c313b;border-radius:3px"></div>
<div class="t" style="left:816px;top:1028px;font:bold 14px 'Liberation Sans',sans-serif;color:#cfd3da;width:23px;text-align:center">1</div>
<div style="position:absolute;left:875px;top:1023px;width:31px;height:24px;background:#2c313b;border-radius:3px"></div>
<div class="t" style="left:875px;top:1028px;font:bold 14px 'Liberation Sans',sans-serif;color:#cfd3da;width:31px;text-align:center">27</div>
<div style="position:absolute;left:911px;top:1023px;width:30px;height:24px;background:#2c313b;border-radius:3px"></div>
<div class="t" style="left:911px;top:1028px;font:bold 14px 'Liberation Sans',sans-serif;color:#cfd3da;width:30px;text-align:center">28</div>
<div style="position:absolute;left:946px;top:1023px;width:31px;height:24px;background:#2c313b;border-radius:3px"></div>
<div class="t" style="left:946px;top:1028px;font:bold 14px 'Liberation Sans',sans-serif;color:#cfd3da;width:31px;text-align:center">29</div>
<div style="position:absolute;left:982px;top:1023px;width:30px;height:24px;background:#2c313b;border-radius:3px"></div>
<div class="t" style="left:982px;top:1028px;font:bold 14px 'Liberation Sans',sans-serif;color:#cfd3da;width:30px;text-align:center">30</div>
<div style="position:absolute;left:1017px;top:1023px;width:31px;height:24px;background:#2c313b;border-radius:3px"></div>
<div class="t" style="left:1017px;top:1028px;font:bold 14px 'Liberation Sans',sans-serif;color:#cfd3da;width:31px;text-align:center">31</div>
<div class="t" style="left:851px;top:1028px;font:bold 13px 'Liberation Sans',sans-serif;color:#cfd3da">...</div>
<div style="position:absolute;left:1054px;top:1000px;width:1px;height:50px;background:#2b303a"></div>
<div style="position:absolute;left:1173px;top:1000px;width:1px;height:50px;background:#2b303a"></div>
<div style="position:absolute;left:1292px;top:1000px;width:1px;height:50px;background:#2b303a"></div>
<div class="t" style="left:1099.5px;top:1013.5px;font-size:16.5px;color:#2f8ff5;letter-spacing:0.734px">618</div>
<div class="t" style="left:1209.5px;top:1013.5px;font-size:16.5px;color:#a2a7b0;letter-spacing:0.277px">53272</div>
<div class="t" style="left:1299.5px;top:1007px;font-size:14.5px;color:#a2a7b0">by</div>
<div class="t" style="left:1320.5px;top:1007px;font-size:14.5px;color:#2f8ff5;letter-spacing:0.581px">TommyT</div>
<div style="position:absolute;left:1385px;top:1009px;width:12px;height:11px;background:#8a8f98;border-radius:2px"></div>
<svg style="left:1387px;top:1011px" width="8" height="7" viewBox="0 0 8 7"><path d="M1 6.5L6 1.5M2.5 1H6.8V5.3" fill="none" stroke="#252a35" stroke-width="1.6"/></svg>
<div class="t" style="left:1300px;top:1024.3px;font-size:14.5px;color:#a2a7b0;letter-spacing:0.610px">Wed Feb 12, 2020 6:34 am</div>
<div style="position:absolute;left:1630px;top:90px;width:225px;height:381px;background:#242936;border:1px solid #2d323d;border-radius:7px"></div>
<div style="position:absolute;left:1696px;top:103px;width:94px;height:7px;background:linear-gradient(to right,#cfc1a0,#e4dcc8,#c8b998)"></div>
<div class="t" style="left:1700px;top:112.2px;font-size:13.1px;color:#a2a7b0;letter-spacing:0.472px">Banned users</div>
<div style="position:absolute;left:1650px;top:139px;width:185px;height:1px;background-image:linear-gradient(to right,#3a3f4a 50%,transparent 50%);background-size:6px 1px"></div>
<div class="t" style="left:1649.5px;top:155px;font:bold 14px 'Liberation Sans',sans-serif;color:#a2a7b0;text-decoration:underline;letter-spacing:0.812px">Menu</div>
<svg style="left:1652px;top:175.47px" width="17" height="16" viewBox="0 0 17 16"><circle cx="8.5" cy="8" r="6.6" fill="none" stroke="#2f8ff5" stroke-width="2.4"/><path d="M5 6.6H8.5V4L12.3 8L8.5 12V9.4H5Z" fill="#2f8ff5"/></svg>
<div class="t" style="left:1673px;top:178.67px;font:bold 13px 'Liberation Sans',sans-serif;color:#2f8ff5;letter-spacing:0.457px">New posts (3)</div>
<svg style="left:1652px;top:198.67px" width="17" height="16" viewBox="0 0 17 16"><circle cx="8.5" cy="8" r="6.6" fill="none" stroke="#2f8ff5" stroke-width="2.4"/><path d="M5 6.6H8.5V4L12.3 8L8.5 12V9.4H5Z" fill="#2f8ff5"/></svg>
<div class="t" style="left:1673px;top:201.86999999999998px;font:bold 13px 'Liberation Sans',sans-serif;color:#2f8ff5;letter-spacing:0.391px">Unread posts (395)</div>
<svg style="left:1652px;top:222.67px" width="17" height="16" viewBox="0 0 17 16"><circle cx="8.5" cy="8" r="6.6" fill="none" stroke="#2f8ff5" stroke-width="2.4"/><path d="M5 6.6H8.5V4L12.3 8L8.5 12V9.4H5Z" fill="#2f8ff5"/></svg>
<div class="t" style="left:1673px;top:225.86999999999998px;font:bold 13px 'Liberation Sans',sans-serif;color:#2f8ff5;letter-spacing:0.480px">Your posts (7820)</div>
<svg style="left:1652px;top:247.67px" width="17" height="16" viewBox="0 0 17 16"><circle cx="8.5" cy="8" r="6.6" fill="none" stroke="#2f8ff5" stroke-width="2.4"/><path d="M5 6.6H8.5V4L12.3 8L8.5 12V9.4H5Z" fill="#2f8ff5"/></svg>
<div class="t" style="left:1673px;top:250.86999999999998px;font:bold 13px 'Liberation Sans',sans-serif;color:#2f8ff5;letter-spacing:0.023px">Bookmarks</div>
<svg style="left:1652px;top:272.37px" width="17" height="16" viewBox="0 0 17 16"><circle cx="8.5" cy="8" r="6.6" fill="none" stroke="#2f8ff5" stroke-width="2.4"/><path d="M5 6.6H8.5V4L12.3 8L8.5 12V9.4H5Z" fill="#2f8ff5"/></svg>
<div class="t" style="left:1673px;top:275.57px;font:bold 13px 'Liberation Sans',sans-serif;color:#2f8ff5;letter-spacing:-0.089px">Subscribed</div>
<svg style="left:1652px;top:296.27000000000004px" width="17" height="16" viewBox="0 0 17 16"><circle cx="8.5" cy="8" r="6.6" fill="none" stroke="#2f8ff5" stroke-width="2.4"/><path d="M5 6.6H8.5V4L12.3 8L8.5 12V9.4H5Z" fill="#2f8ff5"/></svg>
<div class="t" style="left:1673px;top:299.47px;font:bold 13px 'Liberation Sans',sans-serif;color:#2f8ff5;letter-spacing:0.384px">Notifications [84]</div>
<svg style="left:1652px;top:320.97px" width="17" height="16" viewBox="0 0 17 16"><circle cx="8.5" cy="8" r="6.6" fill="none" stroke="#2f8ff5" stroke-width="2.4"/><path d="M5 6.6H8.5V4L12.3 8L8.5 12V9.4H5Z" fill="#2f8ff5"/></svg>
<div class="t" style="left:1673px;top:324.17px;font:bold 13px 'Liberation Sans',sans-serif;color:#2f8ff5;letter-spacing:0.297px">Private messages [0]</div>
<svg style="left:1652px;top:345.97px" width="17" height="16" viewBox="0 0 17 16"><circle cx="8.5" cy="8" r="6.6" fill="none" stroke="#2f8ff5" stroke-width="2.4"/><path d="M5 6.6H8.5V4L12.3 8L8.5 12V9.4H5Z" fill="#2f8ff5"/></svg>
<div class="t" style="left:1673px;top:349.17px;font:bold 13px 'Liberation Sans',sans-serif;color:#2f8ff5;letter-spacing:0.057px">User Control Panel</div>
<svg style="left:1652px;top:370.97px" width="17" height="16" viewBox="0 0 17 16"><circle cx="8.5" cy="8" r="6.6" fill="none" stroke="#2f8ff5" stroke-width="2.4"/><path d="M5 6.6H8.5V4L12.3 8L8.5 12V9.4H5Z" fill="#2f8ff5"/></svg>
<div class="t" style="left:1673px;top:374.17px;font:bold 13px 'Liberation Sans',sans-serif;color:#2f8ff5;letter-spacing:0.128px">Moderator Control Panel</div>
<svg style="left:1652px;top:394.97px" width="17" height="16" viewBox="0 0 17 16"><circle cx="8.5" cy="8" r="6.6" fill="none" stroke="#2f8ff5" stroke-width="2.4"/><path d="M5 6.6H8.5V4L12.3 8L8.5 12V9.4H5Z" fill="#2f8ff5"/></svg>
<div class="t" style="left:1673px;top:398.17px;font:bold 13px 'Liberation Sans',sans-serif;color:#2f8ff5;letter-spacing:-1.027px">ACP</div>
<svg style="left:1652px;top:419.57000000000005px" width="17" height="16" viewBox="0 0 17 16"><circle cx="8.5" cy="8" r="6.6" fill="none" stroke="#2f8ff5" stroke-width="2.4"/><path d="M5 6.6H8.5V4L12.3 8L8.5 12V9.4H5Z" fill="#2f8ff5"/></svg>
<div class="t" style="left:1673px;top:422.77000000000004px;font:bold 13px 'Liberation Sans',sans-serif;color:#2f8ff5;letter-spacing:0.031px">Logout</div>
<div style="position:absolute;left:1630px;top:487px;width:225px;height:700px;background:#242936;border:1px solid #2d323d;border-radius:7px"></div>
<div class="t" style="left:1647.5px;top:498px;font:bold 14px 'Liberation Sans',sans-serif;color:#dcdee2;transform:scaleX(0.9000);transform-origin:0 0">CANNABIS SEED STORE</div>
<div style="position:absolute;left:1650px;top:531px;width:185px;height:519px;background:#020202;overflow:hidden"><svg style="left:0;top:0" width="185" height="519" viewBox="0 0 185 519"><defs><radialGradient id="vg" cx="0.5" cy="0.5" r="0.5"><stop offset="0" stop-color="#3a4a1c"/><stop offset="0.6" stop-color="#1a220c"/><stop offset="1" stop-color="#020202" stop-opacity="0"/></radialGradient><linearGradient id="dial" x1="0" y1="0" x2="1" y2="1"><stop offset="0" stop-color="#f0f0f0"/><stop offset="0.5" stop-color="#b0b0b0"/><stop offset="1" stop-color="#e0e0e0"/></linearGradient><linearGradient id="lf1" x1="1" y1="0" x2="0" y2="0.3"><stop offset="0" stop-color="#5a7230"/><stop offset="0.45" stop-color="#6f8944"/><stop offset="1" stop-color="#3e5420"/></linearGradient><linearGradient id="lf2" x1="0" y1="1" x2="1" y2="0"><stop offset="0" stop-color="#42581f"/><stop offset="0.6" stop-color="#66803a"/><stop offset="1" stop-color="#556c2c"/></linearGradient></defs><ellipse cx="100" cy="85" rx="95" ry="70" fill="url(#vg)"/><path d="M30 75L75 20L120 75" stroke="#2a3418" stroke-width="3" fill="none"/><path d="M0 95C20 92 40 90 60 93" stroke="#3a4a22" stroke-width="3" fill="none"/><g fill="#2f8a4a"><path d="M58 88C46 80 34 68 26 52C40 60 52 70 60 84Z"/><path d="M60 86C54 72 53 58 57 44C63 58 65 72 62 86Z"/><path d="M58 88C46 89 34 88 24 84C36 79 50 81 60 86Z"/><path d="M142 88C154 80 166 68 174 52C160 60 148 70 140 84Z"/><path d="M140 86C146 72 147 58 143 44C137 58 135 72 138 86Z"/><path d="M142 88C154 89 166 88 176 84C164 79 150 81 140 86Z"/></g><rect x="95" y="28" width="11" height="14" fill="#111"/><path d="M51 88A49.5 49.5 0 0 1 150 88Z" fill="#111"/><path d="M56 88A44.5 44.5 0 0 1 145 88Z" fill="url(#dial)"/><path d="M62 88A38.5 38.5 0 0 1 139 88" fill="none" stroke="#111" stroke-width="3"/><path d="M97 40V88M104 40V88" stroke="#111" stroke-width="2"/><path d="M84 88A17 17 0 0 1 118 88" fill="none" stroke="#111" stroke-width="3.5"/><path d="M92 82L79 66M109 82L122 66" stroke="#111" stroke-width="4"/><circle cx="74" cy="62" r="1.5" fill="#111"/><circle cx="137" cy="62" r="1.5" fill="#111"/><rect x="20" y="87" width="160" height="7" fill="#111"/><path d="M20 90.5H180" stroke="#f0a030" stroke-width="4" stroke-dasharray="6 4.5"/><rect x="20" y="120" width="160" height="7" fill="#111"/><path d="M20 123.5H180" stroke="#f0a030" stroke-width="4" stroke-dasharray="6 4.5"/><text x="20" y="119" textLength="160" lengthAdjust="spacingAndGlyphs" font-family="Liberation Sans" font-weight="bold" font-size="28" fill="#fff" stroke="#fff" stroke-width="0.9">THE VAULT</text><text x="19" y="166" textLength="166" lengthAdjust="spacingAndGlyphs" font-family="Liberation Sans" font-weight="bold" font-size="34" fill="#1f6a42" stroke="#eaf2e4" stroke-width="2.2" paint-order="stroke">CANNABIS</text><text x="19" y="188" textLength="166" lengthAdjust="spacingAndGlyphs" font-family="Liberation Sans" font-weight="bold" font-size="24" fill="#1f6a42" stroke="#eaf2e4" stroke-width="2.2" paint-order="stroke">Seeds Store</text><text x="23" y="203" textLength="159" lengthAdjust="spacingAndGlyphs" font-family="Liberation Serif" font-weight="bold" font-size="12" fill="#e4e4e4">DISCREET AND 100% LEGAL</text><text x="22" y="232" textLength="160" lengthAdjust="spacingAndGlyphs" font-family="Liberation Sans" font-weight="bold" font-size="29" fill="#f29a30" stroke="#f29a30" stroke-width="0.6">FREE SEEDS</text><text x="22" y="254" textLength="160" lengthAdjust="spacingAndGlyphs" font-family="Liberation Sans" font-weight="bold" font-size="19" fill="#f4f4f4">WITH EVERY ORDER</text><path d="M113.8 256.5 L109.2 256.6 L110.0 264.0 L105.5 264.1 L106.2 271.5 L101.7 271.6 L102.5 279.0 L98.0 279.1 L98.8 286.5 L94.2 286.6 L95.0 294.0 L90.3 294.2 L90.0 302.7 L85.3 302.8 L85.0 311.3 L80.3 311.5 L80.0 320.0 L75.5 320.4 L76.5 328.0 L72.0 328.4 L73.0 336.0 L68.5 336.4 L69.5 344.0 L65.0 344.4 L66.0 352.0 L61.4 352.3 L62.0 360.2 L57.4 360.6 L58.0 368.5 L53.4 368.8 L54.0 376.8 L49.4 377.1 L50.0 385.0 L45.3 385.2 L45.0 393.8 L40.3 394.0 L40.0 402.5 L35.3 402.7 L35.0 411.2 L30.3 411.5 L30.0 420.0 L25.4 419.8 L25.5 427.5 L20.9 427.3 L21.0 435.0 L16.4 434.8 L16.5 442.5 L11.9 442.3 L12.0 450.0 L7.2 450.6 L7.2 459.5 L2.5 460.1 L2.5 469.0 L-1.8 470.9 L1.0 479.0 L-3.3 480.9 L-0.5 489.0 L-4.8 490.9 L-2.0 499.0 L-6.2 501.2 L-3.0 509.3 L-7.2 511.5 L-4.0 519.7 L-8.2 521.9 L-5.0 530.0 L20.0 530.0 L28.0 525.3 L26.2 520.8 L34.3 516.1 L32.5 511.5 L40.4 507.3 L38.8 502.8 L46.7 498.5 L45.0 494.0 L52.6 491.5 L51.2 487.1 L58.9 484.7 L57.5 480.2 L65.1 477.8 L63.8 473.4 L71.4 470.9 L70.0 466.5 L77.5 463.3 L75.8 459.0 L83.4 455.8 L81.7 451.5 L89.2 448.3 L87.5 444.0 L94.8 438.3 L92.5 434.0 L99.8 428.3 L97.5 424.0 L103.2 418.3 L100.0 415.0 L105.7 409.3 L102.5 406.0 L108.2 400.3 L105.0 397.0 L110.7 391.3 L107.5 388.0 L113.2 382.3 L110.0 379.0 L116.0 372.6 L112.9 369.0 L118.9 362.6 L115.8 359.0 L121.9 352.6 L118.8 349.0 L123.0 342.1 L119.1 339.6 L123.3 332.7 L119.4 330.2 L123.6 323.4 L119.7 320.9 L123.9 314.0 L120.0 311.5 L123.2 304.2 L119.0 302.3 L122.2 295.0 L117.9 293.2 L121.1 285.8 L116.9 284.0 L120.1 276.7 L115.8 274.8 L119.0 267.5 L114.8 265.7 L118.0 258.3 L113.8 256.5Z" fill="url(#lf1)"/><clipPath id="cm"><path d="M113.8 256.5 L109.2 256.6 L110.0 264.0 L105.5 264.1 L106.2 271.5 L101.7 271.6 L102.5 279.0 L98.0 279.1 L98.8 286.5 L94.2 286.6 L95.0 294.0 L90.3 294.2 L90.0 302.7 L85.3 302.8 L85.0 311.3 L80.3 311.5 L80.0 320.0 L75.5 320.4 L76.5 328.0 L72.0 328.4 L73.0 336.0 L68.5 336.4 L69.5 344.0 L65.0 344.4 L66.0 352.0 L61.4 352.3 L62.0 360.2 L57.4 360.6 L58.0 368.5 L53.4 368.8 L54.0 376.8 L49.4 377.1 L50.0 385.0 L45.3 385.2 L45.0 393.8 L40.3 394.0 L40.0 402.5 L35.3 402.7 L35.0 411.2 L30.3 411.5 L30.0 420.0 L25.4 419.8 L25.5 427.5 L20.9 427.3 L21.0 435.0 L16.4 434.8 L16.5 442.5 L11.9 442.3 L12.0 450.0 L7.2 450.6 L7.2 459.5 L2.5 460.1 L2.5 469.0 L-1.8 470.9 L1.0 479.0 L-3.3 480.9 L-0.5 489.0 L-4.8 490.9 L-2.0 499.0 L-6.2 501.2 L-3.0 509.3 L-7.2 511.5 L-4.0 519.7 L-8.2 521.9 L-5.0 530.0 L20.0 530.0 L28.0 525.3 L26.2 520.8 L34.3 516.1 L32.5 511.5 L40.4 507.3 L38.8 502.8 L46.7 498.5 L45.0 494.0 L52.6 491.5 L51.2 487.1 L58.9 484.7 L57.5 480.2 L65.1 477.8 L63.8 473.4 L71.4 470.9 L70.0 466.5 L77.5 463.3 L75.8 459.0 L83.4 455.8 L81.7 451.5 L89.2 448.3 L87.5 444.0 L94.8 438.3 L92.5 434.0 L99.8 428.3 L97.5 424.0 L103.2 418.3 L100.0 415.0 L105.7 409.3 L102.5 406.0 L108.2 400.3 L105.0 397.0 L110.7 391.3 L107.5 388.0 L113.2 382.3 L110.0 379.0 L116.0 372.6 L112.9 369.0 L118.9 362.6 L115.8 359.0 L121.9 352.6 L118.8 349.0 L123.0 342.1 L119.1 339.6 L123.3 332.7 L119.4 330.2 L123.6 323.4 L119.7 320.9 L123.9 314.0 L120.0 311.5 L123.2 304.2 L119.0 302.3 L122.2 295.0 L117.9 293.2 L121.1 285.8 L116.9 284.0 L120.1 276.7 L115.8 274.8 L119.0 267.5 L114.8 265.7 L118.0 258.3 L113.8 256.5Z"/></clipPath><g clip-path="url(#cm)" stroke="#a6bd72" stroke-width="0.9" opacity="0.45" fill="none"><path d="M109.0 272.3 l-30 -22 M109.0 272.3 l40 -34"/><path d="M104.9 282.6 l-30 -22 M104.9 282.6 l40 -34"/><path d="M100.9 292.9 l-30 -22 M100.9 292.9 l40 -34"/><path d="M96.8 303.2 l-30 -22 M96.8 303.2 l40 -34"/><path d="M92.8 313.5 l-30 -22 M92.8 313.5 l40 -34"/><path d="M88.8 323.8 l-30 -22 M88.8 323.8 l40 -34"/><path d="M84.7 334.2 l-30 -22 M84.7 334.2 l40 -34"/><path d="M80.7 344.5 l-30 -22 M80.7 344.5 l40 -34"/><path d="M76.7 354.8 l-30 -22 M76.7 354.8 l40 -34"/><path d="M72.6 365.1 l-30 -22 M72.6 365.1 l40 -34"/><path d="M68.6 375.4 l-30 -22 M68.6 375.4 l40 -34"/><path d="M64.5 385.7 l-30 -22 M64.5 385.7 l40 -34"/><path d="M60.5 396.0 l-30 -22 M60.5 396.0 l40 -34"/><path d="M56.5 406.3 l-30 -22 M56.5 406.3 l40 -34"/><path d="M52.4 416.6 l-30 -22 M52.4 416.6 l40 -34"/><path d="M48.4 426.9 l-30 -22 M48.4 426.9 l40 -34"/><path d="M44.3 437.2 l-30 -22 M44.3 437.2 l40 -34"/><path d="M40.3 447.5 l-30 -22 M40.3 447.5 l40 -34"/><path d="M36.3 457.8 l-30 -22 M36.3 457.8 l40 -34"/><path d="M32.2 468.2 l-30 -22 M32.2 468.2 l40 -34"/><path d="M28.2 478.5 l-30 -22 M28.2 478.5 l40 -34"/><path d="M24.2 488.8 l-30 -22 M24.2 488.8 l40 -34"/><path d="M20.1 499.1 l-30 -22 M20.1 499.1 l40 -34"/><path d="M16.1 509.4 l-30 -22 M16.1 509.4 l40 -34"/><path d="M12.0 519.7 l-30 -22 M12.0 519.7 l40 -34"/><path d="M113 262 L8 530" stroke-width="1.3"/></g><path d="M161.0 256.0 L159.7 258.4 L163.8 262.0 L162.4 264.4 L166.5 268.0 L165.2 270.4 L169.2 274.0 L167.9 276.4 L172.0 280.0 L170.5 282.1 L174.0 285.0 L172.5 287.1 L176.0 290.0 L174.5 292.1 L178.0 295.0 L176.5 297.1 L180.0 300.0 L179.9 302.7 L185.0 304.0 L185.0 268.0 L182.4 263.9 L180.0 265.0 L177.4 260.9 L175.0 262.0 L172.4 258.5 L170.3 260.0 L167.7 256.5 L165.7 258.0 L163.0 254.5 L161.0 256.0Z" fill="#4d6028"/><path d="M117.5 331.5 L116.8 334.4 L122.1 336.5 L121.4 339.4 L126.7 341.5 L126.0 344.4 L131.2 346.5 L130.6 349.4 L135.8 351.5 L135.1 354.4 L140.4 356.5 L139.7 359.4 L145.0 361.5 L146.0 364.3 L151.4 363.1 L152.4 366.0 L157.9 364.8 L158.8 367.6 L164.3 366.4 L165.3 369.3 L170.7 368.1 L171.7 370.9 L177.1 369.7 L178.1 372.5 L183.6 371.4 L184.6 374.2 L190.0 373.0 L190.0 347.0 L185.7 343.5 L183.6 345.6 L179.3 342.1 L177.1 344.1 L172.9 340.6 L170.7 342.7 L166.4 339.2 L164.3 341.3 L160.0 337.8 L157.9 339.9 L153.6 336.3 L151.4 338.4 L147.1 334.9 L145.0 337.0 L140.3 333.5 L138.1 335.6 L133.5 332.1 L131.2 334.2 L126.6 330.8 L124.4 332.9 L119.7 329.4 L117.5 331.5Z" fill="#4f5f28"/><path d="M102.5 414.0 L104.6 416.3 L109.6 413.2 L111.6 415.4 L116.7 412.3 L118.7 414.6 L123.8 411.5 L125.8 413.8 L130.8 410.7 L132.9 412.9 L137.9 409.8 L140.0 412.1 L145.0 409.0 L146.7 411.6 L152.5 409.5 L154.2 412.1 L160.0 410.0 L161.7 412.6 L167.5 410.5 L169.2 413.1 L175.0 411.0 L176.7 413.6 L182.5 411.5 L184.2 414.1 L190.0 412.0 L190.0 390.0 L184.6 388.6 L183.6 391.4 L178.2 390.1 L177.1 392.9 L171.8 391.5 L170.7 394.3 L165.4 392.9 L164.3 395.7 L158.9 394.3 L157.9 397.1 L152.5 395.8 L151.4 398.6 L146.1 397.2 L145.0 400.0 L138.9 399.4 L137.9 402.3 L131.8 401.7 L130.8 404.7 L124.7 404.0 L123.8 407.0 L117.7 406.4 L116.7 409.3 L110.6 408.7 L109.6 411.7 L103.5 411.0 L102.5 414.0Z" fill="#52632a"/><path d="M190.0 418.0 L186.3 415.1 L181.0 421.5 L177.1 419.1 L173.2 425.9 L169.3 423.5 L165.5 430.2 L161.6 427.9 L157.8 434.6 L153.8 432.2 L150.0 439.0 L145.9 437.0 L143.0 444.0 L138.9 442.0 L136.0 449.0 L131.9 447.0 L129.0 454.0 L124.9 452.0 L122.0 459.0 L117.9 457.0 L115.0 464.0 L110.6 462.4 L107.5 470.0 L103.1 468.4 L100.0 476.0 L95.6 474.4 L92.5 482.0 L88.1 480.4 L85.0 488.0 L80.6 486.4 L77.5 494.0 L73.1 492.4 L70.0 500.0 L65.6 498.5 L62.5 506.2 L58.1 504.7 L55.0 512.5 L50.6 511.0 L47.5 518.8 L43.1 517.2 L40.0 525.0 L70.0 525.0 L77.3 527.2 L78.3 522.8 L85.6 524.9 L86.7 520.5 L94.0 522.7 L95.0 518.2 L102.3 520.4 L103.3 516.0 L110.6 518.2 L111.7 513.8 L119.0 515.9 L120.0 511.5 L128.0 512.0 L128.3 507.3 L136.4 507.8 L136.7 503.2 L144.7 503.6 L145.0 499.0 L153.0 500.5 L154.0 496.0 L162.0 497.5 L163.0 493.0 L171.0 494.5 L172.0 490.0 L180.0 491.5 L181.0 487.0 L189.0 488.5 L190.0 484.0 L194.0 476.9 L190.0 474.6 L194.0 467.5 L190.0 465.1 L194.0 458.1 L190.0 455.7 L194.0 448.6 L190.0 446.3 L194.0 439.2 L190.0 436.9 L194.0 429.8 L190.0 427.4 L194.0 420.4 L190.0 418.0Z" fill="url(#lf2)"/><clipPath id="c5"><path d="M190.0 418.0 L186.3 415.1 L181.0 421.5 L177.1 419.1 L173.2 425.9 L169.3 423.5 L165.5 430.2 L161.6 427.9 L157.8 434.6 L153.8 432.2 L150.0 439.0 L145.9 437.0 L143.0 444.0 L138.9 442.0 L136.0 449.0 L131.9 447.0 L129.0 454.0 L124.9 452.0 L122.0 459.0 L117.9 457.0 L115.0 464.0 L110.6 462.4 L107.5 470.0 L103.1 468.4 L100.0 476.0 L95.6 474.4 L92.5 482.0 L88.1 480.4 L85.0 488.0 L80.6 486.4 L77.5 494.0 L73.1 492.4 L70.0 500.0 L65.6 498.5 L62.5 506.2 L58.1 504.7 L55.0 512.5 L50.6 511.0 L47.5 518.8 L43.1 517.2 L40.0 525.0 L70.0 525.0 L77.3 527.2 L78.3 522.8 L85.6 524.9 L86.7 520.5 L94.0 522.7 L95.0 518.2 L102.3 520.4 L103.3 516.0 L110.6 518.2 L111.7 513.8 L119.0 515.9 L120.0 511.5 L128.0 512.0 L128.3 507.3 L136.4 507.8 L136.7 503.2 L144.7 503.6 L145.0 499.0 L153.0 500.5 L154.0 496.0 L162.0 497.5 L163.0 493.0 L171.0 494.5 L172.0 490.0 L180.0 491.5 L181.0 487.0 L189.0 488.5 L190.0 484.0 L194.0 476.9 L190.0 474.6 L194.0 467.5 L190.0 465.1 L194.0 458.1 L190.0 455.7 L194.0 448.6 L190.0 446.3 L194.0 439.2 L190.0 436.9 L194.0 429.8 L190.0 427.4 L194.0 420.4 L190.0 418.0Z"/></clipPath><g clip-path="url(#c5)" stroke="#a6bd72" stroke-width="0.9" opacity="0.45" fill="none"><path d="M177.8 454.2 l-6 -30 M177.8 454.2 l22 20"/><path d="M170.6 458.3 l-6 -30 M170.6 458.3 l22 20"/><path d="M163.3 462.5 l-6 -30 M163.3 462.5 l22 20"/><path d="M156.1 466.7 l-6 -30 M156.1 466.7 l22 20"/><path d="M148.9 470.8 l-6 -30 M148.9 470.8 l22 20"/><path d="M141.7 475.0 l-6 -30 M141.7 475.0 l22 20"/><path d="M134.4 479.2 l-6 -30 M134.4 479.2 l22 20"/><path d="M127.2 483.3 l-6 -30 M127.2 483.3 l22 20"/><path d="M120.0 487.5 l-6 -30 M120.0 487.5 l22 20"/><path d="M112.8 491.7 l-6 -30 M112.8 491.7 l22 20"/><path d="M105.6 495.8 l-6 -30 M105.6 495.8 l22 20"/><path d="M98.3 500.0 l-6 -30 M98.3 500.0 l22 20"/><path d="M91.1 504.2 l-6 -30 M91.1 504.2 l22 20"/><path d="M83.9 508.3 l-6 -30 M83.9 508.3 l22 20"/><path d="M76.7 512.5 l-6 -30 M76.7 512.5 l22 20"/><path d="M69.4 516.7 l-6 -30 M69.4 516.7 l22 20"/><path d="M62.2 520.8 l-6 -30 M62.2 520.8 l22 20"/><path d="M185 450 L55 525" stroke-width="1.3"/></g><circle cx="97" cy="541" r="46" fill="#e2d595" stroke="#c9b56a" stroke-width="2"/><circle cx="97" cy="541" r="38" fill="none" stroke="#cdbd80" stroke-width="1.5"/></svg></div>
<div style="position:absolute;left:1903px;top:103px;width:17px;height:947px;background:#f1f1f1"></div>
<svg style="left:1907px;top:109px" width="9" height="5" viewBox="0 0 9 5"><path d="M0 5L4.5 0L9 5Z" fill="#505050"/></svg>
<svg style="left:1907px;top:1038px" width="9" height="5" viewBox="0 0 9 5"><path d="M0 0L4.5 5L9 0Z" fill="#505050"/></svg>
<div style="position:absolute;left:1905px;top:175px;width:13px;height:132px;background:#c1c1c1"></div></div>
<div style="position:absolute;left:384px;top:217px;width:1226px;height:783px;background:#fff;box-shadow:0 0 12px rgba(0,0,0,0.35)"></div>
<svg style="left:392px;top:224px" width="16" height="16" viewBox="0 0 16 16"><rect x="0.3" y="7" width="1.8" height="8.5" fill="#9a9a9a"/><rect x="0.5" y="6" width="1.5" height="2" fill="#3c3"/><rect x="4" y="1" width="11.5" height="9.5" fill="#d3ecf9" stroke="#a0a4a8"/><path d="M5 7L7.5 3.8L10.5 7.5L12.5 5L14.5 6.3" fill="none" stroke="#1a73d9" stroke-width="1"/><path d="M9 10.5V12.5M6.5 13.5H12" stroke="#a0a4a8" stroke-width="1.5"/></svg>
<div class="t" style="left:413px;top:225.5px;font-size:12.3px;color:#000;letter-spacing:-0.25px">Task Manager</div>
<div style="position:absolute;left:1490px;top:231px;width:11px;height:1px;background:#000"></div>
<div style="position:absolute;left:1536px;top:226px;width:10px;height:10px;border:1px solid #000"></div>
<svg style="left:1581px;top:225px" width="12" height="12" viewBox="0 0 12 12"><path d="M0.5 0.5L11.5 11.5M11.5 0.5L0.5 11.5" stroke="#000" stroke-width="1.1"/></svg>
<div class="t" style="left:390.5px;top:251px;font-size:12px;color:#000;letter-spacing:-0.115px">File</div>
<div class="t" style="left:422.5px;top:251px;font-size:12px;color:#000;letter-spacing:0.273px">Options</div>
<div class="t" style="left:478.5px;top:251px;font-size:12px;color:#000;letter-spacing:0.068px">View</div>
<div style="position:absolute;left:384px;top:265px;width:1226px;height:2px;background:#f0f0f0"></div>
<div style="position:absolute;left:384px;top:291px;width:1226px;height:1px;background:#d9d9d9"></div>
<div style="position:absolute;left:450px;top:271px;width:79px;height:21px;background:#f0f0f0;border:1px solid #d9d9d9"></div>
<div class="t" style="left:454.5px;top:275.5px;font-size:12px;color:#000;letter-spacing:0.055px">Performance</div>
<div style="position:absolute;left:528px;top:271px;width:74px;height:21px;background:#f0f0f0;border:1px solid #d9d9d9"></div>
<div class="t" style="left:534.5px;top:275.5px;font-size:12px;color:#000;letter-spacing:0.147px">App history</div>
<div style="position:absolute;left:601px;top:271px;width:56px;height:21px;background:#f0f0f0;border:1px solid #d9d9d9"></div>
<div class="t" style="left:607.5px;top:275.5px;font-size:12px;color:#000;letter-spacing:0.152px">Start-up</div>
<div style="position:absolute;left:656px;top:271px;width:41px;height:21px;background:#f0f0f0;border:1px solid #d9d9d9"></div>
<div class="t" style="left:662.5px;top:275.5px;font-size:12px;color:#000;letter-spacing:-0.648px">Users</div>
<div style="position:absolute;left:696px;top:271px;width:48px;height:21px;background:#f0f0f0;border:1px solid #d9d9d9"></div>
<div class="t" style="left:702.5px;top:275.5px;font-size:12px;color:#000;letter-spacing:-0.156px">Details</div>
<div style="position:absolute;left:743px;top:271px;width:54px;height:21px;background:#f0f0f0;border:1px solid #d9d9d9"></div>
<div class="t" style="left:749.5px;top:275.5px;font-size:12px;color:#000;letter-spacing:-0.467px">Services</div>
<div style="position:absolute;left:384px;top:269px;width:67px;height:23px;background:#fff;border:1px solid #d9d9d9;border-bottom:none;border-left:none"></div>
<div class="t" style="left:391.5px;top:274px;font-size:12px;color:#000;letter-spacing:-0.504px">Processes</div>
<div style="position:absolute;left:618px;top:307px;width:1px;height:41px;background:#e5e5e5"></div>
<div style="position:absolute;left:738px;top:307px;width:1px;height:41px;background:#e5e5e5"></div>
<div style="position:absolute;left:811px;top:307px;width:1px;height:41px;background:#e5e5e5"></div>
<div style="position:absolute;left:884px;top:307px;width:1px;height:41px;background:#e5e5e5"></div>
<div style="position:absolute;left:957px;top:307px;width:1px;height:41px;background:#e5e5e5"></div>
<div style="position:absolute;left:1030px;top:307px;width:1px;height:41px;background:#e5e5e5"></div>
<div style="position:absolute;left:1103px;top:307px;width:1px;height:41px;background:#e5e5e5"></div>
<div style="position:absolute;left:1303px;top:307px;width:1px;height:41px;background:#e5e5e5"></div>
<div style="position:absolute;left:1403px;top:307px;width:1px;height:41px;background:#e5e5e5"></div>
<div style="position:absolute;left:1503px;top:307px;width:1px;height:41px;background:#e5e5e5"></div>
<div style="position:absolute;left:384px;top:348px;width:1226px;height:1px;background:#bcbcbc"></div>
<div class="t" style="left:390.5px;top:331px;font-size:12px;color:#4d6082;letter-spacing:0.245px">Name</div>
<div class="t" style="left:624.5px;top:331px;font-size:12px;color:#4d6082;letter-spacing:-0.206px">Status</div>
<div class="t" style="left:1110px;top:331px;font-size:12px;color:#4d6082;letter-spacing:-0.319px">GPU engine</div>
<div class="t" style="left:1312.8px;top:331px;font-size:12px;color:#4d6082;letter-spacing:-0.235px">Power usage</div>
<div class="t" style="left:1412.8px;top:331px;font-size:12px;color:#4d6082;letter-spacing:-0.221px">Power usage t...</div>
<div class="t" style="right:1114.5px;top:308.3px;font-size:15px;color:#000;letter-spacing:0.734px">58%</div>
<div class="t" style="right:1114.5px;top:331px;font-size:12px;color:#4d6082;letter-spacing:-0.922px">CPU</div>
<div class="t" style="right:1042px;top:308.3px;font-size:15px;color:#000;letter-spacing:0.984px">43%</div>
<div class="t" style="right:1042px;top:331px;font-size:12px;color:#4d6082;letter-spacing:0.431px">Memory</div>
<div class="t" style="right:968.8px;top:308.3px;font-size:15px;color:#000;letter-spacing:0.812px">0%</div>
<div class="t" style="right:968.8px;top:331px;font-size:12px;color:#4d6082;letter-spacing:-0.365px">Disk</div>
<div class="t" style="right:895.8px;top:308.3px;font-size:15px;color:#000;letter-spacing:0.562px">0%</div>
<div class="t" style="right:895.8px;top:331px;font-size:12px;color:#4d6082;letter-spacing:0.247px">Network</div>
<div class="t" style="right:822.8px;top:308.3px;font-size:15px;color:#000;letter-spacing:0.734px">21%</div>
<div class="t" style="right:822.8px;top:331px;font-size:12px;color:#4d6082;letter-spacing:-1.258px">GPU</div>
<svg style="left:747px;top:311px" width="9" height="6" viewBox="0 0 9 6"><path d="M0.5 0.5L4.5 4.5L8.5 0.5" fill="none" stroke="#4d6082" stroke-width="1"/></svg>
<div style="position:absolute;left:384px;top:349px;width:1209px;height:602px;overflow:hidden"><div style="position:absolute;left:354px;top:0px;width:73px;height:28px;background:#ffd264"></div><div style="position:absolute;left:427px;top:0px;width:73px;height:28px;background:#f9eca8"></div><div style="position:absolute;left:500px;top:0px;width:73px;height:28px;background:#f9eca8"></div><div style="position:absolute;left:573px;top:0px;width:73px;height:28px;background:#f9eca8"></div><div style="position:absolute;left:646px;top:0px;width:73px;height:28px;background:#fff4c4"></div><div style="position:absolute;left:919px;top:0px;width:100px;height:28px;background:#ff6b2c"></div><div style="position:absolute;left:1019px;top:0px;width:100px;height:28px;background:#fff4c4"></div><div style="position:absolute;left:354px;top:28px;width:73px;height:28px;background:#ffe38b"></div><div style="position:absolute;left:427px;top:28px;width:73px;height:28px;background:#f9eca8"></div><div style="position:absolute;left:500px;top:28px;width:73px;height:28px;background:#fff4c4"></div><div style="position:absolute;left:573px;top:28px;width:73px;height:28px;background:#fff4c4"></div><div style="position:absolute;left:646px;top:28px;width:73px;height:28px;background:#fff4c4"></div><div style="position:absolute;left:919px;top:28px;width:100px;height:28px;background:#ffd264"></div><div style="position:absolute;left:1019px;top:28px;width:100px;height:28px;background:#fff4c4"></div><div style="position:absolute;left:354px;top:56px;width:73px;height:28px;background:#f9eca8"></div><div style="position:absolute;left:427px;top:56px;width:73px;height:28px;background:#f9eca8"></div><div style="position:absolute;left:500px;top:56px;width:73px;height:28px;background:#fff4c4"></div><div style="position:absolute;left:573px;top:56px;width:73px;height:28px;background:#fff4c4"></div><div style="position:absolute;left:646px;top:56px;width:73px;height:28px;background:#fff4c4"></div><div style="position:absolute;left:919px;top:56px;width:100px;height:28px;background:#f9eca8"></div><div style="position:absolute;left:1019px;top:56px;width:100px;height:28px;background:#fff4c4"></div><div style="position:absolute;left:354px;top:84px;width:73px;height:28px;background:#f9eca8"></div><div style="position:absolute;left:427px;top:84px;width:73px;height:28px;background:#f9eca8"></div><div style="position:absolute;left:500px;top:84px;width:73px;height:28px;background:#fff4c4"></div><div style="position:absolute;left:573px;top:84px;width:73px;height:28px;background:#fff4c4"></div><div style="position:absolute;left:646px;top:84px;width:73px;height:28px;background:#fff4c4"></div><div style="position:absolute;left:919px;top:84px;width:100px;height:28px;background:#fff4c4"></div><div style="position:absolute;left:1019px;top:84px;width:100px;height:28px;background:#fff4c4"></div><div style="position:absolute;left:354px;top:112px;width:73px;height:28px;background:#f9eca8"></div><div style="position:absolute;left:427px;top:112px;width:73px;height:28px;background:#f9eca8"></div><div style="position:absolute;left:500px;top:112px;width:73px;height:28px;background:#f9eca8"></div><div style="position:absolute;left:573px;top:112px;width:73px;height:28px;background:#fff4c4"></div><div style="position:absolute;left:646px;top:112px;width:73px;height:28px;background:#fff4c4"></div><div style="position:absolute;left:919px;top:112px;width:100px;height:28px;background:#fff4c4"></div><div style="position:absolute;left:1019px;top:112px;width:100px;height:28px;background:#fff4c4"></div><div style="position:absolute;left:354px;top:140px;width:73px;height:28px;background:#f9eca8"></div><div style="position:absolute;left:427px;top:140px;width:73px;height:28px;background:#f9eca8"></div><div style="position:absolute;left:500px;top:140px;width:73px;height:28px;background:#fff4c4"></div><div style="position:absolute;left:573px;top:140px;width:73px;height:28px;background:#fff4c4"></div><div style="position:absolute;left:646px;top:140px;width:73px;height:28px;background:#fff4c4"></div><div style="position:absolute;left:919px;top:140px;width:100px;height:28px;background:#fff4c4"></div><div style="position:absolute;left:1019px;top:140px;width:100px;height:28px;background:#fff4c4"></div><div style="position:absolute;left:354px;top:168px;width:73px;height:28px;background:#f9eca8"></div><div style="position:absolute;left:427px;top:168px;width:73px;height:28px;background:#f9eca8"></div><div style="position:absolute;left:500px;top:168px;width:73px;height:28px;background:#fff4c4"></div><div style="position:absolute;left:573px;top:168px;width:73px;height:28px;background:#fff4c4"></div><div style="position:absolute;left:646px;top:168px;width:73px;height:28px;background:#fff4c4"></div><div style="position:absolute;left:919px;top:168px;width:100px;height:28px;background:#fff4c4"></div><div style="position:absolute;left:1019px;top:168px;width:100px;height:28px;background:#fff4c4"></div><div style="position:absolute;left:354px;top:196px;width:73px;height:28px;background:#f9eca8"></div><div style="position:absolute;left:427px;top:196px;width:73px;height:28px;background:#f9eca8"></div><div style="position:absolute;left:500px;top:196px;width:73px;height:28px;background:#fff4c4"></div><div style="position:absolute;left:573px;top:196px;width:73px;height:28px;background:#fff4c4"></div><div style="position:absolute;left:646px;top:196px;width:73px;height:28px;background:#fff4c4"></div><div style="position:absolute;left:919px;top:196px;width:100px;height:28px;background:#fff4c4"></div><div style="position:absolute;left:1019px;top:196px;width:100px;height:28px;background:#fff4c4"></div><div style="position:absolute;left:354px;top:224px;width:73px;height:28px;background:#f9eca8"></div><div style="position:absolute;left:427px;top:224px;width:73px;height:28px;background:#f9eca8"></div><div style="position:absolute;left:500px;top:224px;width:73px;height:28px;background:#fff4c4"></div><div style="position:absolute;left:573px;top:224px;width:73px;height:28px;background:#fff4c4"></div><div style="position:absolute;left:646px;top:224px;width:73px;height:28px;background:#fff4c4"></div><div style="position:absolute;left:919px;top:224px;width:100px;height:28px;background:#fff4c4"></div><div style="position:absolute;left:1019px;top:224px;width:100px;height:28px;background:#fff4c4"></div><div style="position:absolute;left:354px;top:252px;width:73px;height:28px;background:#f9eca8"></div><div style="position:absolute;left:427px;top:252px;width:73px;height:28px;background:#fff4c4"></div><div style="position:absolute;left:500px;top:252px;width:73px;height:28px;background:#fff4c4"></div><div style="position:absolute;left:573px;top:252px;width:73px;height:28px;background:#fff4c4"></div><div style="position:absolute;left:646px;top:252px;width:73px;height:28px;background:#fff4c4"></div><div style="position:absolute;left:919px;top:252px;width:100px;height:28px;background:#fff4c4"></div><div style="position:absolute;left:1019px;top:252px;width:100px;height:28px;background:#fff4c4"></div><div style="position:absolute;left:354px;top:280px;width:73px;height:28px;background:#f9eca8"></div><div style="position:absolute;left:427px;top:280px;width:73px;height:28px;background:#f9eca8"></div><div style="position:absolute;left:500px;top:280px;width:73px;height:28px;background:#fff4c4"></div><div style="position:absolute;left:573px;top:280px;width:73px;height:28px;background:#fff4c4"></div><div style="position:absolute;left:646px;top:280px;width:73px;height:28px;background:#fff4c4"></div><div style="position:absolute;left:919px;top:280px;width:100px;height:28px;background:#fff4c4"></div><div style="position:absolute;left:1019px;top:280px;width:100px;height:28px;background:#fff4c4"></div><div style="position:absolute;left:354px;top:308px;width:73px;height:28px;background:#f9eca8"></div><div style="position:absolute;left:427px;top:308px;width:73px;height:28px;background:#f9eca8"></div><div style="position:absolute;left:500px;top:308px;width:73px;height:28px;background:#fff4c4"></div><div style="position:absolute;left:573px;top:308px;width:73px;height:28px;background:#fff4c4"></div><div style="position:absolute;left:646px;top:308px;width:73px;height:28px;background:#fff4c4"></div><div style="position:absolute;left:919px;top:308px;width:100px;height:28px;background:#fff4c4"></div><div style="position:absolute;left:1019px;top:308px;width:100px;height:28px;background:#fff4c4"></div><div style="position:absolute;left:354px;top:336px;width:73px;height:28px;background:#f9eca8"></div><div style="position:absolute;left:427px;top:336px;width:73px;height:28px;background:#f9eca8"></div><div style="position:absolute;left:500px;top:336px;width:73px;height:28px;background:#fff4c4"></div><div style="position:absolute;left:573px;top:336px;width:73px;height:28px;background:#fff4c4"></div><div style="position:absolute;left:646px;top:336px;width:73px;height:28px;background:#fff4c4"></div><div style="position:absolute;left:919px;top:336px;width:100px;height:28px;background:#fff4c4"></div><div style="position:absolute;left:1019px;top:336px;width:100px;height:28px;background:#fff4c4"></div><div style="position:absolute;left:354px;top:364px;width:73px;height:28px;background:#f9eca8"></div><div style="position:absolute;left:427px;top:364px;width:73px;height:28px;background:#f9eca8"></div><div style="position:absolute;left:500px;top:364px;width:73px;height:28px;background:#fff4c4"></div><div style="position:absolute;left:573px;top:364px;width:73px;height:28px;background:#fff4c4"></div><div style="position:absolute;left:646px;top:364px;width:73px;height:28px;background:#fff4c4"></div><div style="position:absolute;left:919px;top:364px;width:100px;height:28px;background:#fff4c4"></div><div style="position:absolute;left:1019px;top:364px;width:100px;height:28px;background:#fff4c4"></div><div style="position:absolute;left:354px;top:392px;width:73px;height:28px;background:#f9eca8"></div><div style="position:absolute;left:427px;top:392px;width:73px;height:28px;background:#f9eca8"></div><div style="position:absolute;left:500px;top:392px;width:73px;height:28px;background:#f9eca8"></div><div style="position:absolute;left:573px;top:392px;width:73px;height:28px;background:#fff4c4"></div><div style="position:absolute;left:646px;top:392px;width:73px;height:28px;background:#fff4c4"></div><div style="position:absolute;left:919px;top:392px;width:100px;height:28px;background:#fff4c4"></div><div style="position:absolute;left:1019px;top:392px;width:100px;height:28px;background:#fff4c4"></div><div style="position:absolute;left:354px;top:420px;width:73px;height:28px;background:#f9eca8"></div><div style="position:absolute;left:427px;top:420px;width:73px;height:28px;background:#f9eca8"></div><div style="position:absolute;left:500px;top:420px;width:73px;height:28px;background:#fff4c4"></div><div style="position:absolute;left:573px;top:420px;width:73px;height:28px;background:#fff4c4"></div><div style="position:absolute;left:646px;top:420px;width:73px;height:28px;background:#fff4c4"></div><div style="position:absolute;left:919px;top:420px;width:100px;height:28px;background:#fff4c4"></div><div style="position:absolute;left:1019px;top:420px;width:100px;height:28px;background:#fff4c4"></div><div style="position:absolute;left:354px;top:448px;width:73px;height:28px;background:#fff4c4"></div><div style="position:absolute;left:427px;top:448px;width:73px;height:28px;background:#f9eca8"></div><div style="position:absolute;left:500px;top:448px;width:73px;height:28px;background:#fff4c4"></div><div style="position:absolute;left:573px;top:448px;width:73px;height:28px;background:#fff4c4"></div><div style="position:absolute;left:646px;top:448px;width:73px;height:28px;background:#fff4c4"></div><div style="position:absolute;left:919px;top:448px;width:100px;height:28px;background:#fff4c4"></div><div style="position:absolute;left:1019px;top:448px;width:100px;height:28px;background:#fff4c4"></div><div style="position:absolute;left:354px;top:476px;width:73px;height:28px;background:#fff4c4"></div><div style="position:absolute;left:427px;top:476px;width:73px;height:28px;background:#f9eca8"></div><div style="position:absolute;left:500px;top:476px;width:73px;height:28px;background:#fff4c4"></div><div style="position:absolute;left:573px;top:476px;width:73px;height:28px;background:#fff4c4"></div><div style="position:absolute;left:646px;top:476px;width:73px;height:28px;background:#fff4c4"></div><div style="position:absolute;left:919px;top:476px;width:100px;height:28px;background:#fff4c4"></div><div style="position:absolute;left:1019px;top:476px;width:100px;height:28px;background:#fff4c4"></div><div style="position:absolute;left:354px;top:504px;width:73px;height:28px;background:#fff4c4"></div><div style="position:absolute;left:427px;top:504px;width:73px;height:28px;background:#f9eca8"></div><div style="position:absolute;left:500px;top:504px;width:73px;height:28px;background:#fff4c4"></div><div style="position:absolute;left:573px;top:504px;width:73px;height:28px;background:#fff4c4"></div><div style="position:absolute;left:646px;top:504px;width:73px;height:28px;background:#fff4c4"></div><div style="position:absolute;left:919px;top:504px;width:100px;height:28px;background:#fff4c4"></div><div style="position:absolute;left:1019px;top:504px;width:100px;height:28px;background:#fff4c4"></div><div style="position:absolute;left:354px;top:532px;width:73px;height:28px;background:#fff4c4"></div><div style="position:absolute;left:427px;top:532px;width:73px;height:28px;background:#f9eca8"></div><div style="position:absolute;left:500px;top:532px;width:73px;height:28px;background:#f9eca8"></div><div style="position:absolute;left:573px;top:532px;width:73px;height:28px;background:#fff4c4"></div><div style="position:absolute;left:646px;top:532px;width:73px;height:28px;background:#fff4c4"></div><div style="position:absolute;left:919px;top:532px;width:100px;height:28px;background:#fff4c4"></div><div style="position:absolute;left:1019px;top:532px;width:100px;height:28px;background:#fff4c4"></div><div style="position:absolute;left:354px;top:560px;width:73px;height:28px;background:#fff4c4"></div><div style="position:absolute;left:427px;top:560px;width:73px;height:28px;background:#f9eca8"></div><div style="position:absolute;left:500px;top:560px;width:73px;height:28px;background:#fff4c4"></div><div style="position:absolute;left:573px;top:560px;width:73px;height:28px;background:#fff4c4"></div><div style="position:absolute;left:646px;top:560px;width:73px;height:28px;background:#fff4c4"></div><div style="position:absolute;left:919px;top:560px;width:100px;height:28px;background:#fff4c4"></div><div style="position:absolute;left:1019px;top:560px;width:100px;height:28px;background:#fff4c4"></div><div style="position:absolute;left:354px;top:588px;width:73px;height:28px;background:#fff4c4"></div><div style="position:absolute;left:427px;top:588px;width:73px;height:28px;background:#f9eca8"></div><div style="position:absolute;left:500px;top:588px;width:73px;height:28px;background:#fff4c4"></div><div style="position:absolute;left:573px;top:588px;width:73px;height:28px;background:#fff4c4"></div><div style="position:absolute;left:646px;top:588px;width:73px;height:28px;background:#fff4c4"></div><div style="position:absolute;left:919px;top:588px;width:100px;height:28px;background:#fff4c4"></div><div style="position:absolute;left:1019px;top:588px;width:100px;height:28px;background:#fff4c4"></div><div style="position:absolute;left:0px;top:280px;width:354px;height:28px;background:#e5f3ff"></div><div style="position:absolute;left:719px;top:280px;width:200px;height:28px;background:#e5f3ff"></div><div style="position:absolute;left:354px;top:280px;width:365px;height:28px;background:rgba(229,243,255,0.62)"></div><div style="position:absolute;left:919px;top:280px;width:200px;height:28px;background:rgba(229,243,255,0.62)"></div><div style="position:absolute;left:354px;top:0px;width:1px;height:602px;background:#ecd9a2"></div><div style="position:absolute;left:427px;top:0px;width:1px;height:602px;background:#ecd9a2"></div><div style="position:absolute;left:500px;top:0px;width:1px;height:602px;background:#ecd9a2"></div><div style="position:absolute;left:573px;top:0px;width:1px;height:602px;background:#ecd9a2"></div><div style="position:absolute;left:646px;top:0px;width:1px;height:602px;background:#ecd9a2"></div><div style="position:absolute;left:719px;top:0px;width:1px;height:602px;background:#ecd9a2"></div><div style="position:absolute;left:919px;top:0px;width:1px;height:602px;background:#ecd9a2"></div><div style="position:absolute;left:1019px;top:0px;width:1px;height:602px;background:#ecd9a2"></div><div style="position:absolute;left:1119px;top:0px;width:1px;height:602px;background:#ecd9a2"></div><svg style="left:9px;top:9px" width="7" height="10" viewBox="0 0 7 10"><path d="M1.2 0.8L5.5 5L1.2 9.2" fill="none" stroke="#909090" stroke-width="1.5"/></svg><svg style="left:29px;top:6px" width="16" height="16" viewBox="0 0 16 16"><path d="M8 0.5A7.5 7.5 0 0 1 14.5 4.25H8A3.75 3.75 0 0 0 4.75 6.1L1.5 4.25A7.5 7.5 0 0 1 8 0.5Z" fill="#db4437"/><path d="M14.5 4.25A7.5 7.5 0 0 1 8 15.5L11.25 9.9A3.75 3.75 0 0 0 11.25 6.1Z" fill="#fcc934"/><path d="M8 15.5A7.5 7.5 0 0 1 1.5 4.25L4.75 9.9A3.75 3.75 0 0 0 8 11.75Z" fill="#0f9d58"/><circle cx="8" cy="8" r="3.6" fill="#fff"/><circle cx="8" cy="8" r="2.8" fill="#4285f4"/></svg><div class="t" style="left:51px;top:8px;font-size:12px;color:#000;letter-spacing:-0.107px">Google Chrome (9)</div><div class="t" style="right:788px;top:8px;font-size:12px;color:#000;letter-spacing:-0.45px">34.2%</div><div class="t" style="right:715px;top:8px;font-size:12px;color:#000;letter-spacing:-0.45px">380.3 MB</div><div class="t" style="right:642px;top:8px;font-size:12px;color:#000;letter-spacing:-0.45px">0.1 MB/s</div><div class="t" style="right:569px;top:8px;font-size:12px;color:#000;letter-spacing:-0.45px">0 Mbps</div><div class="t" style="right:496px;top:8px;font-size:12px;color:#000;letter-spacing:-0.45px">0%</div><div class="t" style="left:926px;top:8px;font-size:12px;color:#000;letter-spacing:-0.1px">Very high</div><svg style="left:29px;top:34px" width="16" height="16" viewBox="0 0 16 16"><path d="M8 0.5A7.5 7.5 0 0 1 14.5 4.25H8A3.75 3.75 0 0 0 4.75 6.1L1.5 4.25A7.5 7.5 0 0 1 8 0.5Z" fill="#db4437"/><path d="M14.5 4.25A7.5 7.5 0 0 1 8 15.5L11.25 9.9A3.75 3.75 0 0 0 11.25 6.1Z" fill="#fcc934"/><path d="M8 15.5A7.5 7.5 0 0 1 1.5 4.25L4.75 9.9A3.75 3.75 0 0 0 8 11.75Z" fill="#0f9d58"/><circle cx="8" cy="8" r="3.6" fill="#fff"/><circle cx="8" cy="8" r="2.8" fill="#4285f4"/></svg><div class="t" style="left:51px;top:36px;font-size:12px;color:#000;letter-spacing:-0.010px">Google Chrome</div><div class="t" style="right:788px;top:36px;font-size:12px;color:#000;letter-spacing:-0.45px">11.2%</div><div class="t" style="right:715px;top:36px;font-size:12px;color:#000;letter-spacing:-0.45px">448.7 MB</div><div class="t" style="right:642px;top:36px;font-size:12px;color:#000;letter-spacing:-0.45px">0 MB/s</div><div class="t" style="right:569px;top:36px;font-size:12px;color:#000;letter-spacing:-0.45px">0 Mbps</div><div class="t" style="right:496px;top:36px;font-size:12px;color:#000;letter-spacing:-0.45px">0%</div><div class="t" style="left:926px;top:36px;font-size:12px;color:#000;letter-spacing:-0.1px">Moderate</div><svg style="left:29px;top:62px" width="16" height="16" viewBox="0 0 16 16"><rect x="0.5" y="1.5" width="15" height="12" fill="#fff" stroke="#808080"/><rect x="1" y="2" width="14" height="1.6" fill="#c4c4c4"/><rect x="4" y="5" width="3.5" height="6.5" fill="#1a73d9"/><path d="M9 5.5H13M9 8H13M9 10.5H13" stroke="#555" stroke-width="1" shape-rendering="crispEdges"/></svg><div class="t" style="left:51px;top:64px;font-size:12px;color:#000;letter-spacing:-0.035px">Desktop Window Manager</div><div class="t" style="right:788px;top:64px;font-size:12px;color:#000;letter-spacing:-0.45px">4.3%</div><div class="t" style="right:715px;top:64px;font-size:12px;color:#000;letter-spacing:-0.45px">51.4 MB</div><div class="t" style="right:642px;top:64px;font-size:12px;color:#000;letter-spacing:-0.45px">0 MB/s</div><div class="t" style="right:569px;top:64px;font-size:12px;color:#000;letter-spacing:-0.45px">0 Mbps</div><div class="t" style="right:496px;top:64px;font-size:12px;color:#000;letter-spacing:-0.45px">0%</div><div class="t" style="left:926px;top:64px;font-size:12px;color:#000;letter-spacing:-0.1px">Low</div><svg style="left:9px;top:93px" width="7" height="10" viewBox="0 0 7 10"><path d="M1.2 0.8L5.5 5L1.2 9.2" fill="none" stroke="#909090" stroke-width="1.5"/></svg><svg style="left:29px;top:90px" width="16" height="16" viewBox="0 0 16 16"><rect x="0.3" y="7" width="1.8" height="8.5" fill="#9a9a9a"/><rect x="0.5" y="6" width="1.5" height="2" fill="#3c3"/><rect x="4" y="1" width="11.5" height="9.5" fill="#d3ecf9" stroke="#a0a4a8"/><path d="M5 7L7.5 3.8L10.5 7.5L12.5 5L14.5 6.3" fill="none" stroke="#1a73d9" stroke-width="1"/><path d="M9 10.5V12.5M6.5 13.5H12" stroke="#a0a4a8" stroke-width="1.5"/></svg><div class="t" style="left:51px;top:92px;font-size:12px;color:#000;letter-spacing:-0.280px">Task Manager</div><div class="t" style="right:788px;top:92px;font-size:12px;color:#000;letter-spacing:-0.45px">1.7%</div><div class="t" style="right:715px;top:92px;font-size:12px;color:#000;letter-spacing:-0.45px">26.5 MB</div><div class="t" style="right:642px;top:92px;font-size:12px;color:#000;letter-spacing:-0.45px">0 MB/s</div><div class="t" style="right:569px;top:92px;font-size:12px;color:#000;letter-spacing:-0.45px">0 Mbps</div><div class="t" style="right:496px;top:92px;font-size:12px;color:#000;letter-spacing:-0.45px">0%</div><div class="t" style="left:926px;top:92px;font-size:12px;color:#000;letter-spacing:-0.1px">Very low</div><svg style="left:29px;top:118px" width="16" height="16" viewBox="0 0 16 16"><rect x="0.5" y="1.5" width="15" height="12" fill="#fff" stroke="#808080"/><rect x="1" y="2" width="14" height="1.6" fill="#c4c4c4"/><rect x="4" y="5" width="3.5" height="6.5" fill="#1a73d9"/><path d="M9 5.5H13M9 8H13M9 10.5H13" stroke="#555" stroke-width="1" shape-rendering="crispEdges"/></svg><div class="t" style="left:51px;top:120px;font-size:12px;color:#000;letter-spacing:-0.343px">System</div><div class="t" style="right:788px;top:120px;font-size:12px;color:#000;letter-spacing:-0.45px">1.7%</div><div class="t" style="right:715px;top:120px;font-size:12px;color:#000;letter-spacing:-0.45px">0.1 MB</div><div class="t" style="right:642px;top:120px;font-size:12px;color:#000;letter-spacing:-0.45px">0.1 MB/s</div><div class="t" style="right:569px;top:120px;font-size:12px;color:#000;letter-spacing:-0.45px">0 Mbps</div><div class="t" style="right:496px;top:120px;font-size:12px;color:#000;letter-spacing:-0.45px">0%</div><div class="t" style="left:926px;top:120px;font-size:12px;color:#000;letter-spacing:-0.1px">Very low</div><svg style="left:29px;top:146px" width="16" height="16" viewBox="0 0 16 16"><path d="M0 0.5H6L7.5 2H16V14H0Z" fill="#e3a92a"/><rect x="0" y="3.5" width="16" height="10.5" fill="#fcd05a"/><path d="M3.5 15V10H12.5V15H10.5V12H5.5V15Z" fill="#1e7ad8"/></svg><div class="t" style="left:51px;top:148px;font-size:12px;color:#000;letter-spacing:-0.074px">Windows Explorer</div><div class="t" style="right:788px;top:148px;font-size:12px;color:#000;letter-spacing:-0.45px">1.4%</div><div class="t" style="right:715px;top:148px;font-size:12px;color:#000;letter-spacing:-0.45px">47.9 MB</div><div class="t" style="right:642px;top:148px;font-size:12px;color:#000;letter-spacing:-0.45px">0 MB/s</div><div class="t" style="right:569px;top:148px;font-size:12px;color:#000;letter-spacing:-0.45px">0 Mbps</div><div class="t" style="right:496px;top:148px;font-size:12px;color:#000;letter-spacing:-0.45px">0%</div><div class="t" style="left:926px;top:148px;font-size:12px;color:#000;letter-spacing:-0.1px">Very low</div><svg style="left:9px;top:177px" width="7" height="10" viewBox="0 0 7 10"><path d="M1.2 0.8L5.5 5L1.2 9.2" fill="none" stroke="#909090" stroke-width="1.5"/></svg><svg style="left:29px;top:174px" width="16" height="16" viewBox="0 0 16 16"><rect x="0.5" y="1.5" width="15" height="12" fill="#fff" stroke="#808080"/><rect x="1" y="2" width="14" height="1.6" fill="#c4c4c4"/><rect x="4" y="5" width="3.5" height="6.5" fill="#1a73d9"/><path d="M9 5.5H13M9 8H13M9 10.5H13" stroke="#555" stroke-width="1" shape-rendering="crispEdges"/></svg><div class="t" style="left:51px;top:176px;font-size:12px;color:#000;letter-spacing:-0.024px">Identification Service - Mazda-V...</div><div class="t" style="right:788px;top:176px;font-size:12px;color:#000;letter-spacing:-0.45px">1.0%</div><div class="t" style="right:715px;top:176px;font-size:12px;color:#000;letter-spacing:-0.45px">1.1 MB</div><div class="t" style="right:642px;top:176px;font-size:12px;color:#000;letter-spacing:-0.45px">0 MB/s</div><div class="t" style="right:569px;top:176px;font-size:12px;color:#000;letter-spacing:-0.45px">0 Mbps</div><div class="t" style="right:496px;top:176px;font-size:12px;color:#000;letter-spacing:-0.45px">0%</div><div class="t" style="left:926px;top:176px;font-size:12px;color:#000;letter-spacing:-0.1px">Very low</div><svg style="left:29px;top:202px" width="16" height="16" viewBox="0 0 16 16"><rect x="0.5" y="1.5" width="15" height="12" fill="#fff" stroke="#808080"/><rect x="1" y="2" width="14" height="1.6" fill="#c4c4c4"/><rect x="4" y="5" width="3.5" height="6.5" fill="#1a73d9"/><path d="M9 5.5H13M9 8H13M9 10.5H13" stroke="#555" stroke-width="1" shape-rendering="crispEdges"/></svg><div class="t" style="left:51px;top:204px;font-size:12px;color:#000;letter-spacing:-0.004px">ApMsgFwd</div><div class="t" style="right:788px;top:204px;font-size:12px;color:#000;letter-spacing:-0.45px">0.8%</div><div class="t" style="right:715px;top:204px;font-size:12px;color:#000;letter-spacing:-0.45px">0.5 MB</div><div class="t" style="right:642px;top:204px;font-size:12px;color:#000;letter-spacing:-0.45px">0 MB/s</div><div class="t" style="right:569px;top:204px;font-size:12px;color:#000;letter-spacing:-0.45px">0 Mbps</div><div class="t" style="right:496px;top:204px;font-size:12px;color:#000;letter-spacing:-0.45px">0%</div><div class="t" style="left:926px;top:204px;font-size:12px;color:#000;letter-spacing:-0.1px">Very low</div><svg style="left:29px;top:230px" width="16" height="16" viewBox="0 0 16 16"><rect x="0.5" y="0.5" width="15" height="15" fill="#d9d9d9" stroke="#1a2a6a"/><rect x="2" y="2" width="12" height="8" fill="#c4c4c4"/><path d="M2 13H7M9 13H14" stroke="#1a2a9a" stroke-width="1.5"/></svg><div class="t" style="left:51px;top:232px;font-size:12px;color:#000;letter-spacing:0.009px">Alps Pointing-device Driver</div><div class="t" style="right:788px;top:232px;font-size:12px;color:#000;letter-spacing:-0.45px">0.4%</div><div class="t" style="right:715px;top:232px;font-size:12px;color:#000;letter-spacing:-0.45px">1.5 MB</div><div class="t" style="right:642px;top:232px;font-size:12px;color:#000;letter-spacing:-0.45px">0 MB/s</div><div class="t" style="right:569px;top:232px;font-size:12px;color:#000;letter-spacing:-0.45px">0 Mbps</div><div class="t" style="right:496px;top:232px;font-size:12px;color:#000;letter-spacing:-0.45px">0%</div><div class="t" style="left:926px;top:232px;font-size:12px;color:#000;letter-spacing:-0.1px">Very low</div><svg style="left:29px;top:258px" width="16" height="16" viewBox="0 0 16 16"><rect x="0.5" y="1.5" width="15" height="12" fill="#fff" stroke="#808080"/><rect x="1" y="2" width="14" height="1.6" fill="#c4c4c4"/><rect x="4" y="5" width="3.5" height="6.5" fill="#3a8a6a"/><path d="M9 5.5H13M9 8H13M9 10.5H13" stroke="#555" stroke-width="1" shape-rendering="crispEdges"/></svg><div class="t" style="left:51px;top:260px;font-size:12px;color:#000;letter-spacing:-0.067px">System interrupts</div><div class="t" style="right:788px;top:260px;font-size:12px;color:#000;letter-spacing:-0.45px">0.3%</div><div class="t" style="right:715px;top:260px;font-size:12px;color:#000;letter-spacing:-0.45px">0 MB</div><div class="t" style="right:642px;top:260px;font-size:12px;color:#000;letter-spacing:-0.45px">0 MB/s</div><div class="t" style="right:569px;top:260px;font-size:12px;color:#000;letter-spacing:-0.45px">0 Mbps</div><div class="t" style="right:496px;top:260px;font-size:12px;color:#000;letter-spacing:-0.45px">0%</div><div class="t" style="left:926px;top:260px;font-size:12px;color:#000;letter-spacing:-0.1px">Very low</div><svg style="left:29px;top:286px" width="16" height="16" viewBox="0 0 16 16"><rect x="0.5" y="2.5" width="12" height="13" fill="#fff" stroke="#222"/><path d="M2 5H11M2 7H11M2 9H11M2 11H11" stroke="#999" stroke-width="0.8" stroke-dasharray="1 1"/><path d="M5 12L14 2L15.5 3.5L6.5 13L4.5 14Z" fill="#1a3fb0" stroke="#000" stroke-width="0.6"/></svg><div class="t" style="left:51px;top:288px;font-size:12px;color:#000;letter-spacing:-0.526px">CTF Loader</div><div class="t" style="right:788px;top:288px;font-size:12px;color:#000;letter-spacing:-0.45px">0.2%</div><div class="t" style="right:715px;top:288px;font-size:12px;color:#000;letter-spacing:-0.45px">14.0 MB</div><div class="t" style="right:642px;top:288px;font-size:12px;color:#000;letter-spacing:-0.45px">0 MB/s</div><div class="t" style="right:569px;top:288px;font-size:12px;color:#000;letter-spacing:-0.45px">0 Mbps</div><div class="t" style="right:496px;top:288px;font-size:12px;color:#000;letter-spacing:-0.45px">0%</div><div class="t" style="left:926px;top:288px;font-size:12px;color:#000;letter-spacing:-0.1px">Very low</div><svg style="left:29px;top:314px" width="16" height="16" viewBox="0 0 16 16"><rect x="4" y="0" width="8" height="3" fill="#2ecc40"/><rect x="7" y="2" width="2" height="3" fill="#2a9a2a"/><circle cx="8" cy="10" r="5.5" fill="#e8101a"/><path d="M6 10H11" stroke="#600" stroke-width="1"/></svg><div class="t" style="left:51px;top:316px;font-size:12px;color:#000;letter-spacing:-0.016px">Alps Pointing-device Driver for ...</div><div class="t" style="right:788px;top:316px;font-size:12px;color:#000;letter-spacing:-0.45px">0.2%</div><div class="t" style="right:715px;top:316px;font-size:12px;color:#000;letter-spacing:-0.45px">0.5 MB</div><div class="t" style="right:642px;top:316px;font-size:12px;color:#000;letter-spacing:-0.45px">0 MB/s</div><div class="t" style="right:569px;top:316px;font-size:12px;color:#000;letter-spacing:-0.45px">0 Mbps</div><div class="t" style="right:496px;top:316px;font-size:12px;color:#000;letter-spacing:-0.45px">0%</div><div class="t" style="left:926px;top:316px;font-size:12px;color:#000;letter-spacing:-0.1px">Very low</div><svg style="left:9px;top:345px" width="7" height="10" viewBox="0 0 7 10"><path d="M1.2 0.8L5.5 5L1.2 9.2" fill="none" stroke="#909090" stroke-width="1.5"/></svg><svg style="left:29px;top:342px" width="16" height="16" viewBox="0 0 16 16"><rect x="0.5" y="1.5" width="15" height="12" fill="#fff" stroke="#808080"/><rect x="1" y="2" width="14" height="1.6" fill="#c4c4c4"/><rect x="4" y="5" width="3.5" height="6.5" fill="#3a8a6a"/><path d="M9 5.5H13M9 8H13M9 10.5H13" stroke="#555" stroke-width="1" shape-rendering="crispEdges"/></svg><div class="t" style="left:51px;top:344px;font-size:12px;color:#000;letter-spacing:-0.067px">Runtime Broker</div><div class="t" style="right:788px;top:344px;font-size:12px;color:#000;letter-spacing:-0.45px">0.2%</div><div class="t" style="right:715px;top:344px;font-size:12px;color:#000;letter-spacing:-0.45px">3.8 MB</div><div class="t" style="right:642px;top:344px;font-size:12px;color:#000;letter-spacing:-0.45px">0 MB/s</div><div class="t" style="right:569px;top:344px;font-size:12px;color:#000;letter-spacing:-0.45px">0 Mbps</div><div class="t" style="right:496px;top:344px;font-size:12px;color:#000;letter-spacing:-0.45px">0%</div><div class="t" style="left:926px;top:344px;font-size:12px;color:#000;letter-spacing:-0.1px">Very low</div><svg style="left:9px;top:373px" width="7" height="10" viewBox="0 0 7 10"><path d="M1.2 0.8L5.5 5L1.2 9.2" fill="none" stroke="#909090" stroke-width="1.5"/></svg><svg style="left:29px;top:370px" width="16" height="16" viewBox="0 0 16 16"><rect x="0" y="0" width="16" height="16" fill="#7ab3ea"/><circle cx="8" cy="8" r="4.2" fill="none" stroke="#fff" stroke-width="2.4" stroke-dasharray="2 1.3"/><circle cx="8" cy="8" r="3.3" fill="none" stroke="#fff" stroke-width="1.4"/></svg><div class="t" style="left:51px;top:372px;font-size:12px;color:#000;letter-spacing:-0.223px">Service Host: Remote Procedure...</div><div class="t" style="right:788px;top:372px;font-size:12px;color:#000;letter-spacing:-0.45px">0.2%</div><div class="t" style="right:715px;top:372px;font-size:12px;color:#000;letter-spacing:-0.45px">10.2 MB</div><div class="t" style="right:642px;top:372px;font-size:12px;color:#000;letter-spacing:-0.45px">0 MB/s</div><div class="t" style="right:569px;top:372px;font-size:12px;color:#000;letter-spacing:-0.45px">0 Mbps</div><div class="t" style="right:496px;top:372px;font-size:12px;color:#000;letter-spacing:-0.45px">0%</div><div class="t" style="left:926px;top:372px;font-size:12px;color:#000;letter-spacing:-0.1px">Very low</div><svg style="left:29px;top:398px" width="16" height="16" viewBox="0 0 16 16"><path d="M2.5 13C1 13 0 12 0 10.7C0 9.5 1 8.5 2.3 8.5C2.8 6 4.8 4.3 7.2 4.3C9 4.3 10.5 5.3 11.3 6.7C13.8 6.5 16 8.3 16 10.5C16 12 15 13 13.5 13Z" fill="#0f6cd0"/></svg><div class="t" style="left:51px;top:400px;font-size:12px;color:#000;letter-spacing:-0.022px">Microsoft OneDrive (32 bit)</div><div class="t" style="right:788px;top:400px;font-size:12px;color:#000;letter-spacing:-0.45px">0.2%</div><div class="t" style="right:715px;top:400px;font-size:12px;color:#000;letter-spacing:-0.45px">11.0 MB</div><div class="t" style="right:642px;top:400px;font-size:12px;color:#000;letter-spacing:-0.45px">0.1 MB/s</div><div class="t" style="right:569px;top:400px;font-size:12px;color:#000;letter-spacing:-0.45px">0 Mbps</div><div class="t" style="right:496px;top:400px;font-size:12px;color:#000;letter-spacing:-0.45px">0%</div><div class="t" style="left:926px;top:400px;font-size:12px;color:#000;letter-spacing:-0.1px">Very low</div><svg style="left:29px;top:426px" width="16" height="16" viewBox="0 0 16 16"><rect x="0.5" y="1.5" width="15" height="12" fill="#fff" stroke="#808080"/><rect x="1" y="2" width="14" height="1.6" fill="#c4c4c4"/><rect x="4" y="5" width="3.5" height="6.5" fill="#1a73d9"/><path d="M9 5.5H13M9 8H13M9 10.5H13" stroke="#555" stroke-width="1" shape-rendering="crispEdges"/></svg><div class="t" style="left:51px;top:428px;font-size:12px;color:#000;letter-spacing:-0.234px">Client Server Runtime Process</div><div class="t" style="right:788px;top:428px;font-size:12px;color:#000;letter-spacing:-0.45px">0.1%</div><div class="t" style="right:715px;top:428px;font-size:12px;color:#000;letter-spacing:-0.45px">1.3 MB</div><div class="t" style="right:642px;top:428px;font-size:12px;color:#000;letter-spacing:-0.45px">0 MB/s</div><div class="t" style="right:569px;top:428px;font-size:12px;color:#000;letter-spacing:-0.45px">0 Mbps</div><div class="t" style="right:496px;top:428px;font-size:12px;color:#000;letter-spacing:-0.45px">0%</div><div class="t" style="left:926px;top:428px;font-size:12px;color:#000;letter-spacing:-0.1px">Very low</div><svg style="left:9px;top:457px" width="7" height="10" viewBox="0 0 7 10"><path d="M1.2 0.8L5.5 5L1.2 9.2" fill="none" stroke="#909090" stroke-width="1.5"/></svg><svg style="left:29px;top:454px" width="16" height="16" viewBox="0 0 16 16"><rect x="0.5" y="1.5" width="15" height="12" fill="#fff" stroke="#808080"/><rect x="1" y="2" width="14" height="1.6" fill="#c4c4c4"/><rect x="4" y="5" width="3.5" height="6.5" fill="#1a73d9"/><path d="M9 5.5H13M9 8H13M9 10.5H13" stroke="#555" stroke-width="1" shape-rendering="crispEdges"/></svg><div class="t" style="left:51px;top:456px;font-size:12px;color:#000;letter-spacing:-0.159px">HuaweiHiSuiteService</div><div class="t" style="right:788px;top:456px;font-size:12px;color:#000;letter-spacing:-0.45px">0%</div><div class="t" style="right:715px;top:456px;font-size:12px;color:#000;letter-spacing:-0.45px">0.2 MB</div><div class="t" style="right:642px;top:456px;font-size:12px;color:#000;letter-spacing:-0.45px">0 MB/s</div><div class="t" style="right:569px;top:456px;font-size:12px;color:#000;letter-spacing:-0.45px">0 Mbps</div><div class="t" style="right:496px;top:456px;font-size:12px;color:#000;letter-spacing:-0.45px">0%</div><div class="t" style="left:926px;top:456px;font-size:12px;color:#000;letter-spacing:-0.1px">Very low</div><svg style="left:29px;top:482px" width="16" height="16" viewBox="0 0 16 16"><rect x="0.5" y="1.5" width="15" height="12" fill="#fff" stroke="#808080"/><rect x="1" y="2" width="14" height="1.6" fill="#c4c4c4"/><rect x="4" y="5" width="3.5" height="6.5" fill="#1a73d9"/><path d="M9 5.5H13M9 8H13M9 10.5H13" stroke="#555" stroke-width="1" shape-rendering="crispEdges"/></svg><div class="t" style="left:51px;top:484px;font-size:12px;color:#000;letter-spacing:-0.145px">Services and Controller app</div><div class="t" style="right:788px;top:484px;font-size:12px;color:#000;letter-spacing:-0.45px">0%</div><div class="t" style="right:715px;top:484px;font-size:12px;color:#000;letter-spacing:-0.45px">4.7 MB</div><div class="t" style="right:642px;top:484px;font-size:12px;color:#000;letter-spacing:-0.45px">0 MB/s</div><div class="t" style="right:569px;top:484px;font-size:12px;color:#000;letter-spacing:-0.45px">0 Mbps</div><div class="t" style="right:496px;top:484px;font-size:12px;color:#000;letter-spacing:-0.45px">0%</div><div class="t" style="left:926px;top:484px;font-size:12px;color:#000;letter-spacing:-0.1px">Very low</div><svg style="left:9px;top:513px" width="7" height="10" viewBox="0 0 7 10"><path d="M1.2 0.8L5.5 5L1.2 9.2" fill="none" stroke="#909090" stroke-width="1.5"/></svg><svg style="left:29px;top:510px" width="16" height="16" viewBox="0 0 16 16"><path d="M8 0.8A7.2 7.2 0 0 1 8 15.2C6.7 15.2 5.5 14.9 4.5 14.3L0.8 15.2L1.8 11.6C1.2 10.5 0.8 9.3 0.8 8A7.2 7.2 0 0 1 8 0.8Z" fill="#25c345"/><path d="M5.3 4.3C5 4.6 4.4 5.2 4.5 6.3C4.7 8.1 6.8 10.7 9.5 11.5C10.5 11.8 11.4 11.5 11.8 10.8C12 10.4 11.9 10 11.6 9.9L10.2 9.2C9.9 9.1 9.7 9.2 9.5 9.5L9.1 10C7.8 9.5 6.8 8.5 6.2 7.3L6.6 6.8C6.8 6.6 6.8 6.3 6.7 6.1L6.1 4.6C5.9 4.2 5.6 4.1 5.3 4.3Z" fill="#fff"/></svg><div class="t" style="left:51px;top:512px;font-size:12px;color:#000;letter-spacing:-0.133px">WhatsApp (2)</div><div class="t" style="right:788px;top:512px;font-size:12px;color:#000;letter-spacing:-0.45px">0%</div><div class="t" style="right:715px;top:512px;font-size:12px;color:#000;letter-spacing:-0.45px">557.7 MB</div><div class="t" style="right:642px;top:512px;font-size:12px;color:#000;letter-spacing:-0.45px">0 MB/s</div><div class="t" style="right:569px;top:512px;font-size:12px;color:#000;letter-spacing:-0.45px">0 Mbps</div><div class="t" style="right:496px;top:512px;font-size:12px;color:#000;letter-spacing:-0.45px">0%</div><div class="t" style="left:926px;top:512px;font-size:12px;color:#000;letter-spacing:-0.1px">Very low</div><svg style="left:9px;top:541px" width="7" height="10" viewBox="0 0 7 10"><path d="M1.2 0.8L5.5 5L1.2 9.2" fill="none" stroke="#909090" stroke-width="1.5"/></svg><svg style="left:29px;top:538px" width="16" height="16" viewBox="0 0 16 16"><rect x="0" y="0" width="16" height="16" fill="#7ab3ea"/><circle cx="8" cy="8" r="4.2" fill="none" stroke="#fff" stroke-width="2.4" stroke-dasharray="2 1.3"/><circle cx="8" cy="8" r="3.3" fill="none" stroke="#fff" stroke-width="1.4"/></svg><div class="t" style="left:51px;top:540px;font-size:12px;color:#000;letter-spacing:-0.285px">Service Host: SysMain</div><div class="t" style="right:788px;top:540px;font-size:12px;color:#000;letter-spacing:-0.45px">0%</div><div class="t" style="right:715px;top:540px;font-size:12px;color:#000;letter-spacing:-0.45px">1.2 MB</div><div class="t" style="right:642px;top:540px;font-size:12px;color:#000;letter-spacing:-0.45px">0.1 MB/s</div><div class="t" style="right:569px;top:540px;font-size:12px;color:#000;letter-spacing:-0.45px">0 Mbps</div><div class="t" style="right:496px;top:540px;font-size:12px;color:#000;letter-spacing:-0.45px">0%</div><div class="t" style="left:926px;top:540px;font-size:12px;color:#000;letter-spacing:-0.1px">Very low</div><svg style="left:9px;top:569px" width="7" height="10" viewBox="0 0 7 10"><path d="M1.2 0.8L5.5 5L1.2 9.2" fill="none" stroke="#909090" stroke-width="1.5"/></svg><svg style="left:29px;top:566px" width="16" height="16" viewBox="0 0 16 16"><rect x="0" y="0" width="16" height="16" fill="#7ab3ea"/><circle cx="8" cy="8" r="4.2" fill="none" stroke="#fff" stroke-width="2.4" stroke-dasharray="2 1.3"/><circle cx="8" cy="8" r="3.3" fill="none" stroke="#fff" stroke-width="1.4"/></svg><div class="t" style="left:51px;top:568px;font-size:12px;color:#000;letter-spacing:-0.153px">Service Host: Diagnostic Policy ...</div><div class="t" style="right:788px;top:568px;font-size:12px;color:#000;letter-spacing:-0.45px">0%</div><div class="t" style="right:715px;top:568px;font-size:12px;color:#000;letter-spacing:-0.45px">16.5 MB</div><div class="t" style="right:642px;top:568px;font-size:12px;color:#000;letter-spacing:-0.45px">0 MB/s</div><div class="t" style="right:569px;top:568px;font-size:12px;color:#000;letter-spacing:-0.45px">0 Mbps</div><div class="t" style="right:496px;top:568px;font-size:12px;color:#000;letter-spacing:-0.45px">0%</div><div class="t" style="left:926px;top:568px;font-size:12px;color:#000;letter-spacing:-0.1px">Very low</div><svg style="left:9px;top:597px" width="7" height="10" viewBox="0 0 7 10"><path d="M1.2 0.8L5.5 5L1.2 9.2" fill="none" stroke="#909090" stroke-width="1.5"/></svg><svg style="left:29px;top:594px" width="16" height="16" viewBox="0 0 16 16"><rect x="0" y="0" width="16" height="16" fill="#7ab3ea"/><circle cx="8" cy="8" r="4.2" fill="none" stroke="#fff" stroke-width="2.4" stroke-dasharray="2 1.3"/><circle cx="8" cy="8" r="3.3" fill="none" stroke="#fff" stroke-width="1.4"/></svg><div class="t" style="left:51px;top:596px;font-size:12px;color:#000;letter-spacing:-0.573px">Service Host: DCOM Server Proc...</div><div class="t" style="right:788px;top:596px;font-size:12px;color:#000;letter-spacing:-0.45px">0%</div><div class="t" style="right:715px;top:596px;font-size:12px;color:#000;letter-spacing:-0.45px">18.3 MB</div><div class="t" style="right:642px;top:596px;font-size:12px;color:#000;letter-spacing:-0.45px">0 MB/s</div><div class="t" style="right:569px;top:596px;font-size:12px;color:#000;letter-spacing:-0.45px">0 Mbps</div><div class="t" style="right:496px;top:596px;font-size:12px;color:#000;letter-spacing:-0.45px">0%</div><div class="t" style="left:926px;top:596px;font-size:12px;color:#000;letter-spacing:-0.1px">Very low</div></div>
<div style="position:absolute;left:1594px;top:349px;width:16px;height:602px;background:#f0f0f0"></div>
<svg style="left:1598px;top:355px" width="8" height="6" viewBox="0 0 8 6"><path d="M0.8 5.2L4 2L7.2 5.2" fill="none" stroke="#606060" stroke-width="1.8"/></svg>
<svg style="left:1598px;top:940px" width="8" height="6" viewBox="0 0 8 6"><path d="M0.8 0.8L4 4L7.2 0.8" fill="none" stroke="#606060" stroke-width="1.8"/></svg>
<div style="position:absolute;left:1594px;top:366px;width:15px;height:56px;background:#c8c8c8"></div>
<div style="position:absolute;left:384px;top:951px;width:1226px;height:1px;background:#a0a0a0"></div>
<svg style="left:392px;top:966px" width="19" height="19" viewBox="0 0 19 19"><circle cx="9.5" cy="9.5" r="9" fill="none" stroke="#8a8a8a" stroke-width="1"/><path d="M5.5 11.5L9.5 7.5L13.5 11.5" fill="none" stroke="#8a8a8a" stroke-width="1.1"/></svg>
<div class="t" style="left:418px;top:970px;font-size:12px;color:#000;letter-spacing:-0.2px">Fewer details</div>
<div style="position:absolute;left:1518px;top:965px;width:83px;height:21px;background:#cccccc;border:1px solid #bfbfbf"></div>
<div class="t" style="left:1537px;top:969.5px;font-size:12px;color:#76809a;letter-spacing:-0.3px">End task</div>
<div style="position:absolute;left:0px;top:1050px;width:1920px;height:30px;background:linear-gradient(to right,#3d413e,#3a463f 45%,#3b4741)"></div>
<svg style="left:10px;top:1057px" width="16" height="16" viewBox="0 0 16 16"><path d="M0 2.3L6.5 1.4V7.5H0ZM7.4 1.3L16 0V7.5H7.4ZM0 8.4H6.5V14.6L0 13.7ZM7.4 8.4H16V16L7.4 14.8Z" fill="#fff"/></svg>
<svg style="left:46px;top:1057px" width="17" height="17" viewBox="0 0 17 17"><circle cx="10.5" cy="6.5" r="5.5" fill="none" stroke="#fff" stroke-width="1.3"/><path d="M6.5 10.5L0.8 16.2" stroke="#fff" stroke-width="1.5"/></svg>
<svg style="left:82px;top:1057px" width="16" height="16" viewBox="0 0 16 16"><circle cx="8" cy="8" r="6.8" fill="none" stroke="#fff" stroke-width="2"/></svg>
<svg style="left:117px;top:1057px" width="17" height="17" viewBox="0 0 17 17"><g fill="none" stroke="#fff" stroke-width="1.2"><rect x="2.5" y="4.5" width="9" height="8"/><path d="M0.5 2.5H13.5M0.5 14.5H13.5M15.5 1V3.5M15.5 5.5V11.5M15.5 13.5V16"/></g></svg>
<svg style="left:156px;top:1057px" width="17" height="17" viewBox="0 0 17 17"><path d="M1 8.5C1.5 3.5 5 0.8 9 0.8C13.5 0.8 16.5 4 16.5 9V10H5.5C5.8 13 8 14.5 10.8 14.5C12.5 14.5 14 14 15.5 13.2V15.8C14 16.5 12.3 16.8 10.5 16.8C5 16.8 2.5 13.5 2.5 10C2.5 7 4 5.2 6 4.2C4.5 5.5 4.2 6.8 5.5 7.5H12.5C12.5 5 11 3.5 8.5 3.5C5.5 3.5 3 5.5 1 8.5Z" fill="#1e8ee8"/></svg>
<svg style="left:193px;top:1057px" width="17" height="16" viewBox="0 0 17 16"><path d="M0 0H7L8 2H17V16H0Z" fill="#e8b22a"/><rect x="0" y="3" width="17" height="13" fill="#fcd05a"/><path d="M4.5 16V11H12.5V16H10.5V13H6.5V16Z" fill="#1a6fd6"/></svg>
<svg style="left:229px;top:1058px" width="16" height="16" viewBox="0 0 16 16"><path d="M8 0.5A7.5 7.5 0 0 1 14.5 4.25H8A3.75 3.75 0 0 0 4.75 6.1L1.5 4.25A7.5 7.5 0 0 1 8 0.5Z" fill="#db4437"/><path d="M14.5 4.25A7.5 7.5 0 0 1 8 15.5L11.25 9.9A3.75 3.75 0 0 0 11.25 6.1Z" fill="#fcc934"/><path d="M8 15.5A7.5 7.5 0 0 1 1.5 4.25L4.75 9.9A3.75 3.75 0 0 0 8 11.75Z" fill="#0f9d58"/><circle cx="8" cy="8" r="3.6" fill="#fff"/><circle cx="8" cy="8" r="2.8" fill="#4285f4"/></svg>
<div class="t" style="left:249px;top:1059px;font-size:12px;color:#fff;letter-spacing:-0.320px">(84) GrowRoom420 C...</div>
<div style="position:absolute;left:225px;top:1078px;width:152px;height:2px;background:#f5b2dc"></div>
<svg style="left:390px;top:1057px" width="16" height="16" viewBox="0 0 16 16"><path d="M8 0.8A7.2 7.2 0 0 1 8 15.2C6.7 15.2 5.5 14.9 4.5 14.3L0.8 15.2L1.8 11.6C1.2 10.5 0.8 9.3 0.8 8A7.2 7.2 0 0 1 8 0.8Z" fill="#25c345" stroke="#fff" stroke-width="0.8"/><path d="M5.3 4.3C5 4.6 4.4 5.2 4.5 6.3C4.7 8.1 6.8 10.7 9.5 11.5C10.5 11.8 11.4 11.5 11.8 10.8C12 10.4 11.9 10 11.6 9.9L10.2 9.2C9.9 9.1 9.7 9.2 9.5 9.5L9.1 10C7.8 9.5 6.8 8.5 6.2 7.3L6.6 6.8C6.8 6.6 6.8 6.3 6.7 6.1L6.1 4.6C5.9 4.2 5.6 4.1 5.3 4.3Z" fill="#fff"/></svg>
<div class="t" style="left:410px;top:1059px;font-size:12px;color:#fff;letter-spacing:0.092px">WhatsApp</div>
<div style="position:absolute;left:386px;top:1078px;width:152px;height:2px;background:#f5b2dc"></div>
<div style="position:absolute;left:543px;top:1050px;width:160px;height:30px;background:#646a65"></div>
<svg style="left:550px;top:1057px" width="17" height="16" viewBox="0 0 16 16"><rect x="0.5" y="5" width="2" height="9" fill="#9a9a9a"/><rect x="1" y="5" width="1.2" height="1.5" fill="#3c3"/><rect x="4" y="1.5" width="11.5" height="9" fill="#cfe9f7" stroke="#c0c4c8"/><path d="M5 7L7.5 4L10 7.5L12 5L14.5 6" fill="none" stroke="#1a73d9" stroke-width="1"/><path d="M8 11H11.5L12.5 13.5H7Z" fill="#c0c4c8"/></svg>
<div class="t" style="left:571px;top:1059px;font-size:12px;color:#fff;letter-spacing:-0.261px">Task Manager</div>
<div style="position:absolute;left:543px;top:1078px;width:160px;height:2px;background:#f5b2dc"></div>
<svg style="left:1568px;top:1057px" width="17" height="16" viewBox="0 0 17 16"><path d="M7 0.5L13.5 2.5V8C13.5 11.5 10.5 14 7 15.5C3.5 14 0.5 11.5 0.5 8V2.5Z" fill="#fff" stroke="#000" stroke-width="1"/><path d="M7 1V15M1 7.5H13" stroke="#000" stroke-width="1.5"/><path d="M12 9L16.5 16H7.5Z" fill="#f8c41a"/><path d="M12 11.3V13.8" stroke="#000" stroke-width="1"/></svg>
<svg style="left:1594px;top:1056px" width="13" height="18" viewBox="0 0 13 18"><rect x="0" y="0" width="13" height="18" rx="6.5" fill="#1e8fe8"/><path d="M3.5 5.5L9 11L6.5 14V4L9 7L3.5 12.5" fill="none" stroke="#fff" stroke-width="1.1"/></svg>
<svg style="left:1618px;top:1057px" width="13" height="15" viewBox="0 0 13 15"><rect x="0.5" y="0.5" width="12" height="14" fill="#4aa8f0" stroke="#ccc"/><rect x="1" y="1" width="11" height="5" fill="#222"/><path d="M2 2.5H11M2 4.5H11" stroke="#888" stroke-width="0.6" stroke-dasharray="1 1"/></svg>
<svg style="left:1640px;top:1059px" width="17" height="11" viewBox="0 0 17 11"><path d="M3 10.5C1.5 10.5 0.5 9.5 0.5 8.2C0.5 7 1.5 6 2.8 6C3.3 3.5 5.3 1.8 7.7 1.8C9.5 1.8 11 2.8 11.8 4.2C14.3 4 16.5 5.8 16.5 8C16.5 9.5 15.5 10.5 14 10.5Z" fill="#e0e0e0"/></svg>
<svg style="left:1664px;top:1057px" width="16" height="16" viewBox="0 0 16 16"><rect x="0.5" y="0.5" width="15" height="15" rx="2" fill="#3aa0e8" stroke="#1a5fa0"/><path d="M3 5H11V9H3Z M9 9L12 12" fill="none" stroke="#e0f0ff" stroke-width="1"/><path d="M1 14L5 11" stroke="#f0c020" stroke-width="1.5"/></svg>
<svg style="left:1688px;top:1057px" width="17" height="17" viewBox="0 0 17 17"><circle cx="8.5" cy="8.5" r="7.8" fill="#fff" stroke="#1e7fd8" stroke-width="1.4"/><circle cx="8.5" cy="8.5" r="6" fill="#1e7fd8"/><circle cx="10" cy="6" r="2" fill="none" stroke="#fff" stroke-width="1.3"/><path d="M8.7 7.3L4.5 11.5M5.5 10.5L6.8 11.8" stroke="#fff" stroke-width="1.3"/></svg>
<svg style="left:1712px;top:1057px" width="17" height="17" viewBox="0 0 17 17"><path d="M3 2C8 1 14 5 16 12L9 15C6 10 4 6 3 2Z" fill="#111" stroke="#ddd" stroke-width="0.8"/><circle cx="5" cy="12" r="2.5" fill="#ddd"/><path d="M3 16L6 13" stroke="#ddd" stroke-width="1.2"/></svg>
<svg style="left:1736px;top:1057px" width="16" height="16" viewBox="0 0 16 16"><rect x="0.5" y="0.5" width="15" height="15" fill="#d8d8d8" stroke="#2a3a9a"/><rect x="2" y="2" width="12" height="8" fill="#c0c0c0"/><path d="M2 13H7M9 13H14" stroke="#2a3aaa" stroke-width="1.5"/></svg>
<svg style="left:1760px;top:1058px" width="17" height="14" viewBox="0 0 17 14"><path d="M1 1V4M4 1V4M0 4H5V6C5 7.5 4 8.5 2.5 8.5V13" fill="none" stroke="#fff" stroke-width="1.2"/><rect x="6.5" y="4.5" width="9" height="7" fill="none" stroke="#fff" stroke-width="1.2"/><rect x="8" y="6" width="5" height="4" fill="#fff"/><rect x="15.5" y="6.5" width="1.5" height="3" fill="#fff"/></svg>
<svg style="left:1787px;top:1057px" width="14" height="15" viewBox="0 0 14 15"><g fill="none" stroke="#fff" stroke-width="1.1"><path d="M0.5 14.5A13.5 13.5 0 0 1 13.5 1.5"/><path d="M3.5 14.5A10.5 10.5 0 0 1 13.5 4.5"/><path d="M6.5 14.5A7.5 7.5 0 0 1 13.5 7.5"/><path d="M9.5 14.5A4.5 4.5 0 0 1 13.5 10.5"/></g><circle cx="12.5" cy="13.5" r="1.3" fill="#fff"/></svg>
<svg style="left:1807px;top:1057px" width="18" height="16" viewBox="0 0 18 16"><path d="M0.8 5.5H3.5L7.5 1.5V14.5L3.5 10.5H0.8Z" fill="none" stroke="#fff" stroke-width="1.1"/><path d="M10 5.5C11 6.5 11 9.5 10 10.5M12.5 3.5C14.5 5.5 14.5 10.5 12.5 12.5M15 1.5C18 4.5 18 11.5 15 14.5" fill="none" stroke="#fff" stroke-width="1.1"/></svg>
<div class="t" style="left:1833.5px;top:1058.8px;font-size:12.3px;color:#fff;letter-spacing:-0.570px">08:17</div>
<svg style="left:1879px;top:1057px" width="17" height="17" viewBox="0 0 17 17"><path d="M0.5 0.5H16.5V12.5H10.5L8.5 15.5L6.5 12.5H0.5Z" fill="#fff"/><path d="M3 4H14M3 6.5H14M3 9H10" stroke="#3a403c" stroke-width="1.1"/></svg>
<div style="position:absolute;left:1915px;top:1050px;width:1px;height:30px;background:#8a8f8c"></div>
</body></html>
